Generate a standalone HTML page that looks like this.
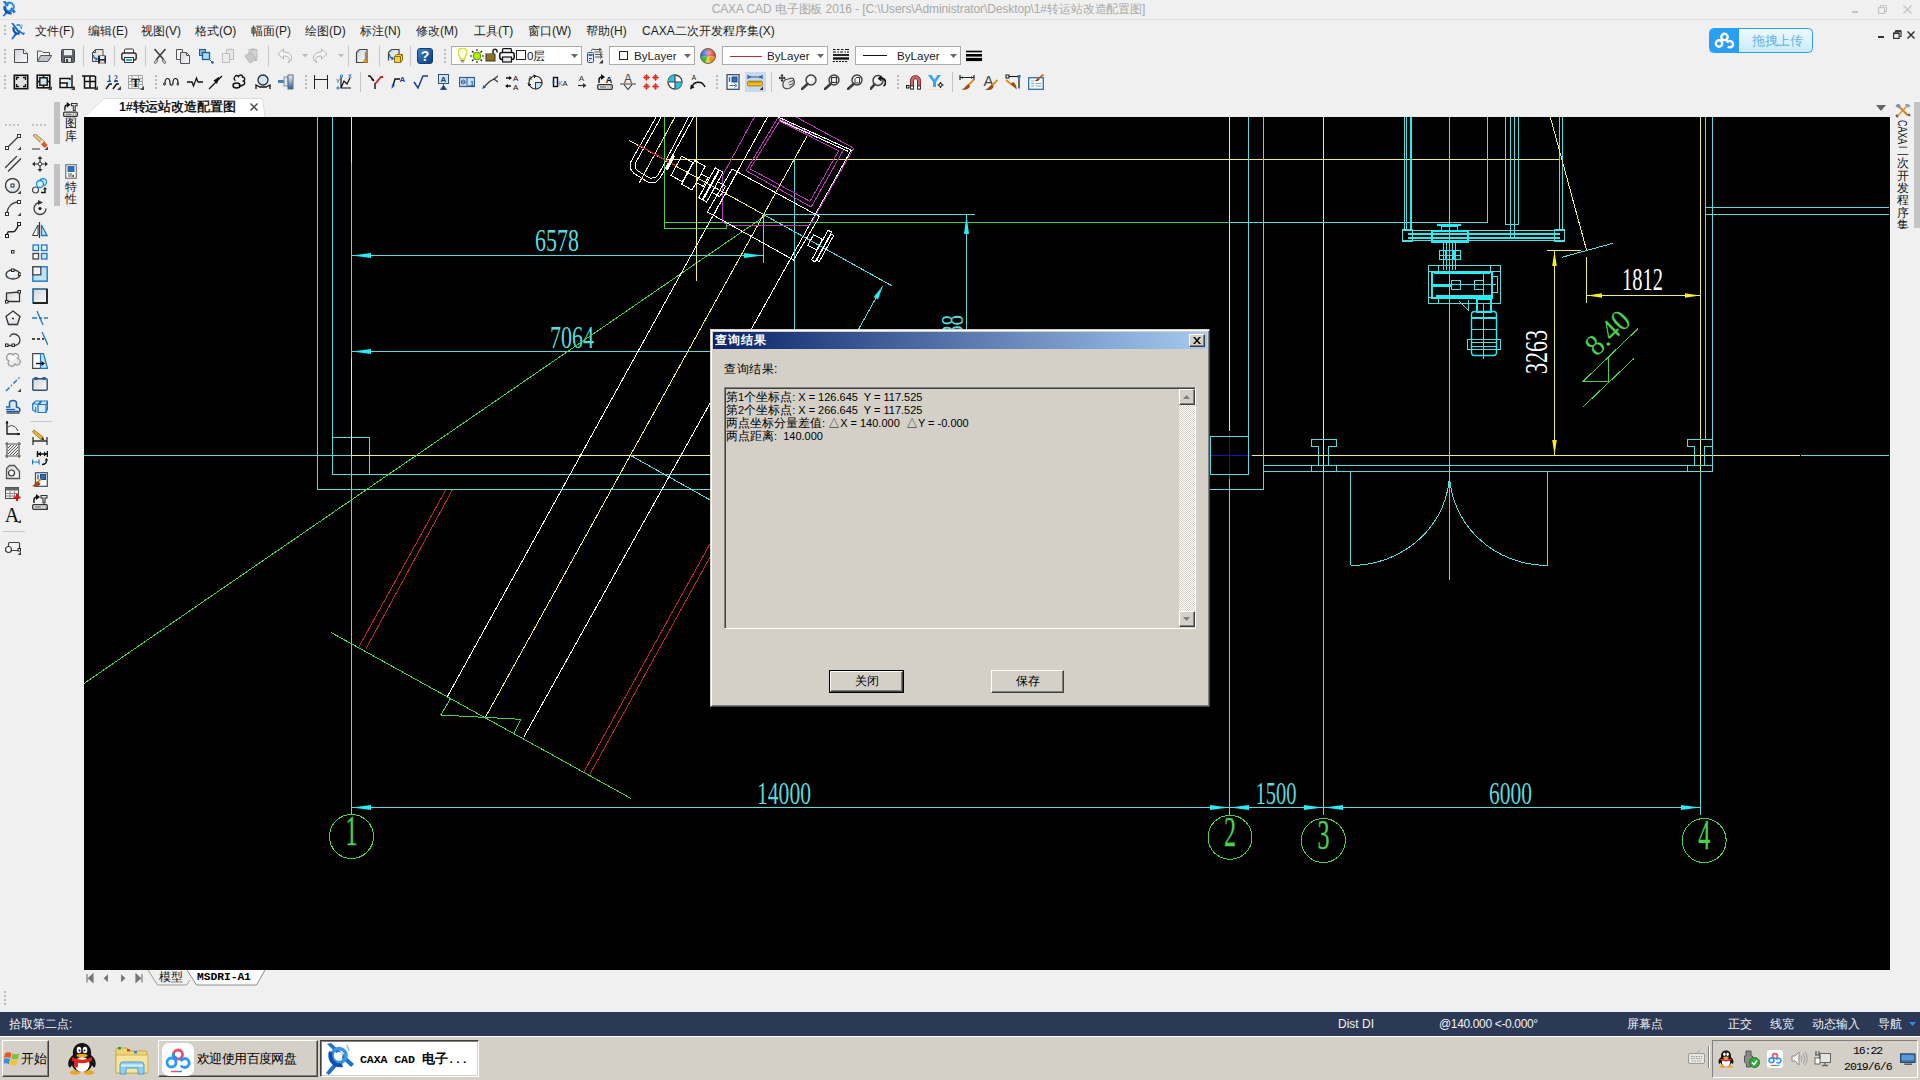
<!DOCTYPE html>
<html lang="zh">
<head>
<meta charset="utf-8">
<title>CAXA CAD</title>
<style>
*{box-sizing:border-box;margin:0;padding:0}
html,body{width:1920px;height:1080px;overflow:hidden;background:#f0f0f0;font-family:"Liberation Sans",sans-serif;font-size:12px;color:#1a1a1a}
.abs{position:absolute}
#titlebar{left:0;top:0;width:1920px;height:20px;background:#f0f0f0;border-bottom:1px solid #e2e2e2}
#title{left:0;top:1px;width:1857px;text-align:center;color:#a9a9a9;font-size:12px;line-height:16px;white-space:nowrap;letter-spacing:-.1px}
#menubar{left:0;top:20px;width:1920px;height:23px}
.mi{position:absolute;top:24px;font-size:12px;line-height:15px;white-space:nowrap;color:#1e1e1e}
#canvas{left:84px;top:117px;width:1806px;height:853px;background:#000}
#status{left:0;top:1012px;width:1920px;height:24px;background:#2b3856;color:#fff}
.st{position:absolute;top:4px;font-size:12px;line-height:16px;color:#f4f4f4;white-space:nowrap}
#taskbar{left:0;top:1036px;width:1920px;height:44px;background:#d4d0c8;border-top:1px solid #fff}
/* dialog */
#dlg{left:710px;top:329px;width:500px;height:378px;background:#d4d0c8;border:1px solid;border-color:#d4d0c8 #404040 #404040 #d4d0c8;box-shadow:inset 1px 1px 0 #fff, inset -1px -1px 0 #808080}
#dlgtitle{left:2px;top:2px;width:494px;height:17px;letter-spacing:.9px;background:linear-gradient(90deg,#0a246a 0%,#a6caf0 100%);color:#fff;font-weight:bold;font-size:12px;line-height:17px;padding-left:2px}
.btn{position:absolute;background:#d4d0c8;border:1px solid;border-color:#fff #404040 #404040 #fff;box-shadow:inset -1px -1px 0 #808080;text-align:center;font-size:12px;line-height:20px;color:#000}

.grip{position:absolute;width:2px;background:repeating-linear-gradient(to bottom,#bcbcbc 0,#bcbcbc 2px,transparent 2px,transparent 4px)}
.combo{background:#fff;border:1px solid #ababab}
.ctext{font-size:11.600px;line-height:15px;color:#1a1a1a;white-space:nowrap}
#tabbar{left:84px;top:97px;width:1805px;height:20px}
.sunken{border:1px solid;border-color:#808080 #fff #fff #808080;box-shadow:inset 1px 1px 0 #404040, inset -1px -1px 0 #d4d0c8}
#qtext{left:13px;top:57px;width:472px;height:242px;background:#d4d0c8}
#qtext .l{position:absolute;left:1px;font-size:11px;line-height:13px;white-space:pre;color:#000}
#qtext .l b{font-weight:normal;font-size:12px}
.sbtn{position:absolute;width:16px;height:16px;background:#d4d0c8;border:1px solid;border-color:#fff #404040 #404040 #fff;box-shadow:inset -1px -1px 0 #808080}

.vch{font-size:12px;line-height:13px;width:13px;height:13px;text-align:center;color:#111}
.tbtn{background:#d4d0c8;border:1px solid;border-color:#fff #404040 #404040 #fff;box-shadow:inset -1px -1px 0 #808080}
</style>
</head>
<body>
<!-- TITLE BAR -->
<div id="titlebar" class="abs"></div>
<div id="title" class="abs">CAXA CAD 电子图板 2016 - [C:\Users\Administrator\Desktop\1#转运站改造配置图]</div>

<!-- MENU BAR -->
<div id="menubar" class="abs"></div>
<div class="mi" style="left:35px">文件(F)</div>
<div class="mi" style="left:88px">编辑(E)</div>
<div class="mi" style="left:141px">视图(V)</div>
<div class="mi" style="left:195px">格式(O)</div>
<div class="mi" style="left:251px">幅面(P)</div>
<div class="mi" style="left:305px">绘图(D)</div>
<div class="mi" style="left:360px">标注(N)</div>
<div class="mi" style="left:416px">修改(M)</div>
<div class="mi" style="left:474px">工具(T)</div>
<div class="mi" style="left:528px">窗口(W)</div>
<div class="mi" style="left:586px">帮助(H)</div>
<div class="mi" style="left:642px">CAXA二次开发程序集(X)</div>

<svg width="0" height="0" style="position:absolute"><defs>
<linearGradient id="gp" x1="0" y1="0" x2="1" y2="1"><stop offset="0" stop-color="#cfd4da"/><stop offset="1" stop-color="#fbfbfc"/></linearGradient>
<linearGradient id="gh" x1="0" y1="0" x2="1" y2="1"><stop offset="0" stop-color="#3f86d0"/><stop offset="1" stop-color="#0d3b78"/></linearGradient>
<linearGradient id="g3" x1="0" y1="0" x2="0" y2="1"><stop offset="0" stop-color="#f4f6f8"/><stop offset="1" stop-color="#2c5e9e"/></linearGradient>
<radialGradient id="gz" cx=".4" cy=".35" r=".7"><stop offset="0" stop-color="#fff"/><stop offset="1" stop-color="#d4dde6"/></radialGradient>
<radialGradient id="gw" cx=".5" cy=".3" r=".8"><stop offset="0" stop-color="#fff" stop-opacity=".55"/><stop offset=".6" stop-color="#fff" stop-opacity="0"/></radialGradient>
</defs></svg>
<div class="abs grip" style="left:4px;top:49px;height:14px"></div>
<svg class="abs" style="left:13px;top:48px" width="16" height="16" viewBox="0 0 16 16"><path d="M1.5 1.5h9l4 4v9h-13z" fill="url(#gp)" stroke="#4a4a4a"/><path d="M10.5 1.5v4h4" fill="#fafafa" stroke="#4a4a4a"/></svg>
<svg class="abs" style="left:36px;top:48px" width="16" height="16" viewBox="0 0 16 16"><path d="M1.5 13.5v-10.5h4l1.5 1.5h6.5v3" stroke="#555" fill="#f4f4f4"/><path d="M1.5 13.5l3.2-6h11l-3.7 6z" fill="#bfc4ca" stroke="#555"/></svg>
<svg class="abs" style="left:60px;top:48px" width="16" height="16" viewBox="0 0 16 16"><rect x="1.5" y="1.5" width="13" height="13" rx="1.2" fill="#5b6472" stroke="#444"/><rect x="4" y="2" width="8" height="5.2" fill="#eceef0"/><rect x="4.5" y="9.5" width="7" height="5" fill="#dcdcdc" stroke="#444"/><rect x="6" y="11" width="2" height="3" fill="#444"/></svg>
<svg class="abs" style="left:91px;top:48px" width="16" height="16" viewBox="0 0 16 16"><path d="M1.5 13.500v-9l3-3h7.500v12z" fill="url(#gp)" stroke="#4a4a4a"/><path d="M1.5 4.500h3v-3" fill="none" stroke="#4a4a4a"/><path d="M2.5 7c0 3 1 4 3.5 4M4.5 9.5l1.8 1.5-1.8 1.5" stroke="#1b6fc0" fill="none" stroke-width="1.3"/><rect x="7" y="7.5" width="8" height="8" fill="#222"/><rect x="9" y="8" width="4.5" height="3" fill="#e8e8e8"/><rect x="9" y="12.5" width="4.5" height="3" fill="#ccc"/></svg>
<svg class="abs" style="left:121px;top:48px" width="16" height="16" viewBox="0 0 16 16"><rect x="3.5" y="1" width="9" height="5" rx="1" fill="#fff" stroke="#333"/><rect x="0.8" y="5" width="14.4" height="7" rx="2" fill="#f0f0f0" stroke="#2a2a2a" stroke-width="1.4"/><rect x="3.5" y="9.5" width="9" height="5" fill="#fff" stroke="#333"/><rect x="5" y="11" width="6" height="2" fill="#29a9c8"/></svg>
<svg class="abs" style="left:152px;top:48px" width="16" height="16" viewBox="0 0 16 16"><path d="M2.5 1l9.5 11M13.5 1l-9.5 11" stroke="#3c3c3c" stroke-width="1.6" fill="none"/><path d="M2 14.5l2.5-3 1.5 1.2-2.5 3zM14 14.5l-2.5-3-1.5 1.2 2.5 3z" fill="#ddd" stroke="#444" stroke-width=".8"/></svg>
<svg class="abs" style="left:175px;top:48px" width="16" height="16" viewBox="0 0 16 16"><path d="M1.5 1.5h6v10h-6z" fill="#f4f4f4" stroke="#555"/><path d="M5.500 4.500h6l3 3v8h-9z" fill="url(#gp)" stroke="#555"/><path d="M11.5 4.500v3h3" fill="none" stroke="#555"/></svg>
<svg class="abs" style="left:198px;top:48px" width="16" height="16" viewBox="0 0 16 16"><rect x="1.5" y="1.5" width="6" height="6" fill="#7db7e0" stroke="#1b5f9c"/><rect x="4.500" y="4.500" width="7" height="7" fill="#a8daf2" stroke="#1b5f9c" stroke-width="1.3"/><path d="M11.5 11.5l3 3" stroke="#1b5f9c"/><circle cx="14.500" cy="14.500" r="1.2" fill="#1b5f9c"/></svg>
<svg class="abs" style="left:221px;top:48px" width="16" height="16" viewBox="0 0 16 16"><path d="M5.500 1.500h7v10h-7z" fill="#e6e6e6" stroke="#bdbdbd"/><path d="M1.5 5.500h7v9h-7z" fill="#ececec" stroke="#bdbdbd"/><rect x="7" y=".5" width="4" height="2" fill="#ccc"/></svg>
<svg class="abs" style="left:244px;top:48px" width="16" height="16" viewBox="0 0 16 16"><path d="M5 1.500h8v11h-8z" fill="#d4d4d4" stroke="#bdbdbd"/><path d="M1 8l6-4 5 7-6 4z" fill="#c9c9c9" stroke="#b5b5b5"/><rect x="7" y=".5" width="4" height="2" fill="#bbb"/></svg>
<svg class="abs" style="left:277px;top:48px" width="16" height="16" viewBox="0 0 16 16"><path d="M1 6l5.500-5v3c5 0 8 2 8 6.500 0 2-1.500 3.500-3.500 4 1-1 1.500-2 1.500-3 0-2-2-3.500-6-3.500v3z" fill="#f4f4f4" stroke="#b4b4b4"/></svg>
<svg class="abs" style="left:312px;top:48px" width="16" height="16" viewBox="0 0 16 16"><path d="M15 6l-5.500-5v3c-5 0-8 2-8 6.500 0 2 1.500 3.500 3.500 4-1-1-1.500-2-1.500-3 0-2 2-3.500 6-3.500v3z" fill="#f4f4f4" stroke="#b4b4b4"/></svg>
<svg class="abs" style="left:355px;top:48px" width="16" height="16" viewBox="0 0 16 16"><path d="M1.5 14.500v-10l3-3h7.500v13z" fill="url(#gp)" stroke="#444" stroke-width="1.2"/><path d="M10.500 4v6" stroke="#c8821a" stroke-width="1.4"/><path d="M8 14.500l2.500-4.500 2.500 4.500z" fill="#f29a1f" stroke="#b06a10" stroke-width=".7"/></svg>
<svg class="abs" style="left:387px;top:48px" width="16" height="16" viewBox="0 0 16 16"><path d="M1.500 12.500v-8l3-3h7.500v5" fill="url(#gp)" stroke="#444" stroke-width="1.2"/><path d="M2.500 6c0 3 1 4.500 3.500 4.500M4.500 9l1.800 1.500-1.800 1.500" stroke="#1b6fc0" fill="none" stroke-width="1.3"/><path d="M7.500 8.500l2-2h6v6l-2 2h-6z" fill="#f5cf3a" stroke="#8a6d10"/><path d="M7.500 8.500h6v6M13.500 8.500l2-2" stroke="#8a6d10" fill="none"/></svg>
<svg class="abs" style="left:417px;top:48px" width="16" height="16" viewBox="0 0 16 16"><rect x=".5" y=".5" width="15" height="15" rx="2.500" fill="url(#gh)" stroke="#0f3f78"/><text x="8" y="13" font-family="'Liberation Sans',sans-serif" font-weight="bold" font-size="14" fill="#fff" text-anchor="middle">?</text></svg>
<div class="abs" style="left:83px;top:46px;width:1px;height:20px;background:#c4c4c4"></div>
<div class="abs" style="left:114px;top:46px;width:1px;height:20px;background:#c4c4c4"></div>
<div class="abs" style="left:145px;top:46px;width:1px;height:20px;background:#c4c4c4"></div>
<div class="abs" style="left:268px;top:46px;width:1px;height:20px;background:#c4c4c4"></div>
<div class="abs" style="left:348px;top:46px;width:1px;height:20px;background:#c4c4c4"></div>
<div class="abs" style="left:379px;top:46px;width:1px;height:20px;background:#c4c4c4"></div>
<div class="abs" style="left:410px;top:46px;width:1px;height:20px;background:#c4c4c4"></div>
<svg class="abs" style="left:302px;top:54px" width="6" height="4" viewBox="0 0 6 4"><path d="M0 0h6l-3 3.500z" fill="#bdbdbd"/></svg>
<svg class="abs" style="left:338px;top:54px" width="6" height="4" viewBox="0 0 6 4"><path d="M0 0h6l-3 3.500z" fill="#bdbdbd"/></svg>
<div class="abs grip" style="left:444px;top:49px;height:14px"></div>
<div class="abs combo" style="left:451px;top:46px;width:131px;height:19px"></div>
<svg class="abs" style="left:571px;top:54px" width="7" height="4" viewBox="0 0 7 4"><path d="M0 0h7l-3.500 4z" fill="#666"/></svg>
<svg class="abs" style="left:458px;top:48px" width="10" height="15" viewBox="0 0 10 15"><path d="M5 0c-3.500 0-5 2.500-5 4.500 0 2 1.500 3 2 5v1.500h5v-1.500c.500-2 2-3 2-5 0-2-1.500-4.500-4-4.500z" fill="#fdfdf0" stroke="#d7e021" stroke-width="1.400"/><path d="M2.500 12.500h4M3 14h3" stroke="#777" stroke-width="1.200"/></svg>
<svg class="abs" style="left:470px;top:49px" width="14" height="14" viewBox="0 0 14 14"><circle cx="7" cy="7" r="3.800" fill="#b5f000" stroke="#5d8a00"/><path d="M7 0v2M7 12v2M0 7h2M12 7h2M2 2l1.500 1.500M10.500 10.500l1.500 1.500M12 2l-1.500 1.500M2 12l1.500-1.500" stroke="#111" stroke-width="1.100"/></svg>
<svg class="abs" style="left:485px;top:48px" width="13" height="14" viewBox="0 0 13 14"><path d="M8 6v-3c0-2.500 4-2.500 4 0v1.500" fill="none" stroke="#222" stroke-width="1.500"/><rect x="1" y="6" width="9" height="7" fill="#caa83a" stroke="#3a3210"/><path d="M1 8h9M1 10h9M1 12h9" stroke="#3a3210" stroke-width=".9"/></svg>
<svg class="abs" style="left:499px;top:48px" width="16" height="15" viewBox="0 0 16 15"><rect x="3.500" y="0.700" width="9" height="5" rx="1" fill="#fff" stroke="#111" stroke-width="1.300"/><rect x=".800" y="4.500" width="14.400" height="7" rx="2.200" fill="#fff" stroke="#111" stroke-width="1.500"/><rect x="3.500" y="9" width="9" height="5" fill="#e6e6e6" stroke="#111" stroke-width="1.200"/></svg>
<div class="abs" style="left:516px;top:50px;width:10px;height:10px;border:1.300px solid #222"></div>
<div class="abs ctext" style="left:527px;top:48px">0层</div>
<svg class="abs" style="left:587px;top:48px" width="16" height="16" viewBox="0 0 16 16"><rect x=".500" y="4.500" width="6" height="10" rx="1" fill="#dfeaf5" stroke="#35536f"/><rect x="1.500" y="6" width="4" height="2" fill="#2f6db5"/><path d="M2 10.500h3M2 12.500h1" stroke="#35536f"/><path d="M6 1.500l8 0M7.500 4h8M8 6.500h6M8 9h7" stroke="#555" stroke-width="1.100"/><path d="M4 3l2-2.500M12 0l2.500 1.500-2.500 1.500M13 5l2.500 1.500-2.500 1.500M13 7.500l2.500 1.500-2.500 1.500" fill="none" stroke="#555"/><path d="M16.500 15.500h-4.500l4.500-4.500z" fill="#333"/></svg>
<div class="abs combo" style="left:609px;top:46px;width:86px;height:19px"></div>
<svg class="abs" style="left:684px;top:54px" width="7" height="4" viewBox="0 0 7 4"><path d="M0 0h7l-3.500 4z" fill="#666"/></svg>
<div class="abs" style="left:619px;top:51px;width:9px;height:9px;border:1.200px solid #222"></div>
<div class="abs ctext" style="left:634px;top:48px">ByLayer</div>
<svg class="abs" style="left:700px;top:48px" width="16" height="16" viewBox="0 0 16 16"><circle cx="8" cy="8" r="7.500" fill="#e8d23a"/><path d="M8 8L.5 8A7.500 7.500 0 0 1 8 .5z" fill="#3a57d8"/><path d="M8 8V.5A7.500 7.500 0 0 1 15.500 8z" fill="#e23a2a"/><path d="M8 8L.5 8A7.500 7.500 0 0 0 5 14.900z" fill="#3ab54a"/><path d="M8 8L15.500 8A7.500 7.500 0 0 1 11 14.900z" fill="#f08a2a"/><circle cx="8" cy="8" r="7.500" fill="url(#gw)" stroke="#666"/></svg>
<div class="abs combo" style="left:722px;top:46px;width:106px;height:19px"></div>
<svg class="abs" style="left:817px;top:54px" width="7" height="4" viewBox="0 0 7 4"><path d="M0 0h7l-3.500 4z" fill="#666"/></svg>
<div class="abs" style="left:730px;top:56px;width:32px;height:1px;background:#c0282d"></div>
<div class="abs ctext" style="left:767px;top:48px">ByLayer</div>
<svg class="abs" style="left:833px;top:48px" width="16" height="16" viewBox="0 0 16 16"><path d="M0 1.500h2.500M4 1.500h2.500M8 1.500h2.500M12 1.500h4M0 4h3M4.500 4h1.500M7 4h3M11.500 4h1.500M14 4h2M0 13.500h2M3 13.500h2M6 13.500h2M9 13.500h2M12 13.500h2" stroke="#111" stroke-width="1.200"/><path d="M0 7h16" stroke="#111" stroke-width="1.800"/><path d="M0 10.500h16" stroke="#111" stroke-width="2.400"/></svg>
<div class="abs combo" style="left:855px;top:46px;width:106px;height:19px"></div>
<svg class="abs" style="left:950px;top:54px" width="7" height="4" viewBox="0 0 7 4"><path d="M0 0h7l-3.500 4z" fill="#666"/></svg>
<div class="abs" style="left:863px;top:55px;width:24px;height:1px;background:#111"></div>
<div class="abs ctext" style="left:897px;top:48px">ByLayer</div>
<svg class="abs" style="left:966px;top:50px" width="16" height="12" viewBox="0 0 16 11"><path d="M0 1h16" stroke="#000" stroke-width="1.600"/><path d="M0 4.800h16" stroke="#000" stroke-width="2.600"/><path d="M0 9h16" stroke="#000" stroke-width="3.200"/></svg>
<div class="abs grip" style="left:4px;top:75px;height:14px"></div>
<svg class="abs" style="left:13px;top:74px" width="16" height="16" viewBox="0 0 16 16"><rect x="1.300" y="1.300" width="13.400" height="13.400" fill="#e2e2e2" stroke="#111" stroke-width="1.600"/><path d="M3.500 6v-2.500h2.500M10 3.500h2.500v2.500M12.500 10v2.500h-2.500M6 12.500h-2.500v-2.500" stroke="#111" fill="none" stroke-width="1.300"/></svg>
<svg class="abs" style="left:36px;top:74px" width="16" height="16" viewBox="0 0 16 16"><rect x="1.200" y="1.200" width="12.600" height="12.600" fill="#e2e2e2" stroke="#111" stroke-width="1.600"/><rect x="3.800" y="3.800" width="7.400" height="7.400" fill="#cfe6f5" stroke="#111" stroke-width="1.400"/><path d="M7.500 1v3M7.500 11v3M1 7.500h3M11 7.500h3" stroke="#111" stroke-width="1.600"/><path d="M16 16h-4l4-4z" fill="#444"/></svg>
<svg class="abs" style="left:59px;top:74px" width="16" height="16" viewBox="0 0 16 16"><path d="M1 4.500h10v9h-10zM1 9h10M8 9v4.500" fill="#f6f6f6" stroke="#111" stroke-width="1.400"/><path d="M11 13.500h4M13 1v13" stroke="#111" stroke-width="1.400"/><rect x="9" y="6" width="3" height="7" fill="#cfe6f5"/><path d="M16 16h-4l4-4z" fill="#444"/></svg>
<svg class="abs" style="left:82px;top:74px" width="16" height="16" viewBox="0 0 16 16"><path d="M0 2h13M2.500 2v12h11v-12M2.500 7.500h11M8 2v12" fill="none" stroke="#111" stroke-width="1.500"/><path d="M16 16h-4l4-4z" fill="#444"/></svg>
<svg class="abs" style="left:105px;top:74px" width="16" height="16" viewBox="0 0 16 16"><text x="2.500" y="6.500" font-size="7.500" font-family="'Liberation Serif',serif" font-weight="bold" fill="#154c9c">1</text><text x="9" y="6.500" font-size="7.500" font-family="'Liberation Serif',serif" font-weight="bold" fill="#154c9c">2</text><path d="M2 7.500h4M9 7.500h4" stroke="#154c9c"/><path d="M1 15l3.500-5h2.500M8 15l3.500-5h2.500" stroke="#111" stroke-width="1.400" fill="none"/><path d="M16 16h-4l4-4z" fill="#444"/></svg>
<svg class="abs" style="left:128px;top:74px" width="16" height="16" viewBox="0 0 16 16"><path d="M.5 1.500h14v13h-14zM.5 4.500h14M.5 7.500h14M.5 10.500h14M4 1.500v13M10.500 1.500v13" fill="#f2f2f2" stroke="#a4a4a4"/><text x="7.500" y="12.500" font-size="13" font-family="'Liberation Serif',serif" font-weight="bold" fill="#111" text-anchor="middle">T</text><path d="M16 16h-4l4-4z" fill="#444"/></svg>
<svg class="abs" style="left:163px;top:74px" width="16" height="16" viewBox="0 0 16 16"><circle cx="1.500" cy="10" r="1" fill="none" stroke="#111"/><path d="M2 9c0-6 5-6 5 0 0 3 3 3 3 0 0-6 5-6 5 0" fill="none" stroke="#111" stroke-width="1.100"/><circle cx="15" cy="10" r="1" fill="none" stroke="#111"/></svg>
<svg class="abs" style="left:187px;top:74px" width="16" height="16" viewBox="0 0 16 16"><path d="M0 8h5l1.500 4 3-8 1.500 4h5" fill="none" stroke="#111" stroke-width="1.300"/></svg>
<svg class="abs" style="left:208px;top:74px" width="16" height="16" viewBox="0 0 16 16"><path d="M1 15l13-13" stroke="#111" stroke-width="1.300"/><path d="M11.500 2.500l-6 4 3.500 3.500z" fill="#111"/></svg>
<svg class="abs" style="left:232px;top:74px" width="16" height="16" viewBox="0 0 16 16"><path d="M3 3c0-2 3-2 3.500-.5 1 -2 4-2 4 .5 2.500 0 3 3 1 4 2 1 1.500 4-1 4-1 1.500-3 1-3.500 0" fill="none" stroke="#111" stroke-width="1.400"/><ellipse cx="4.500" cy="11.500" rx="3.500" ry="2.500" fill="none" stroke="#111" stroke-width="1.400"/><path d="M3 3c-1.500 1-1 3 .5 3.500" fill="none" stroke="#111" stroke-width="1.400"/></svg>
<svg class="abs" style="left:255px;top:74px" width="16" height="16" viewBox="0 0 16 16"><circle cx="8" cy="6" r="5" fill="#cfe8f8" stroke="#2a2a2a" stroke-width="1.300"/><path d="M1 15v-4l4 2h6l4-2v4" fill="none" stroke="#111" stroke-width="1.300"/></svg>
<svg class="abs" style="left:278px;top:74px" width="16" height="16" viewBox="0 0 16 16"><rect x="0" y="6" width="7" height="3" fill="#4a7fb5"/><rect x="6" y="3" width="4" height="9" fill="#dfe7ee" stroke="#7d8fa0"/><rect x="10" y="1" width="5" height="14" fill="url(#g3)" stroke="#5a6b7c"/></svg>
<svg class="abs" style="left:313px;top:74px" width="16" height="16" viewBox="0 0 16 16"><path d="M1.500 1v14M14.500 1v14M1.500 5.500h13" stroke="#222" stroke-width="1" fill="none"/></svg>
<svg class="abs" style="left:336px;top:74px" width="16" height="16" viewBox="0 0 16 16"><path d="M5 3v11h10M5 14l3-7 3 3 3-6" fill="none" stroke="#111" stroke-width="1.200"/><circle cx="5.500" cy="2" r="1.200" fill="none" stroke="#1b78c8"/><circle cx="2" cy="14" r="1.200" fill="none" stroke="#1b78c8"/><text x="0" y="9" font-size="5.500" fill="#1b78c8" font-family="'Liberation Sans',sans-serif" font-weight="bold">Y</text><text x="12" y="4" font-size="5.500" fill="#1b78c8" font-family="'Liberation Sans',sans-serif" font-weight="bold">X</text></svg>
<svg class="abs" style="left:367px;top:74px" width="16" height="16" viewBox="0 0 16 16"><path d="M1 2h2l4 5M8 15v-6" stroke="#111" stroke-width="1.400" fill="none"/><path d="M8 10l6-7h2" stroke="#d51c1c" stroke-width="1.800" fill="none"/><path d="M4 6l3 1-1-3" fill="#111"/></svg>
<svg class="abs" style="left:390px;top:74px" width="16" height="16" viewBox="0 0 16 16"><path d="M3 12l2-7h5" fill="none" stroke="#111" stroke-width="1.400"/><path d="M1.500 15l.5-5 3 1.500z" fill="#1b5fb0"/><text x="9.500" y="8" font-size="8" font-weight="bold" font-family="'Liberation Sans',sans-serif" fill="#1b3f90">A</text></svg>
<svg class="abs" style="left:413px;top:74px" width="16" height="16" viewBox="0 0 16 16"><path d="M1 8l4 6 5-12h5" fill="none" stroke="#173f8a" stroke-width="1.500"/></svg>
<svg class="abs" style="left:437px;top:74px" width="16" height="16" viewBox="0 0 16 16"><rect x="1.500" y=".500" width="10" height="9" fill="#d0e4f5" stroke="#35536f"/><text x="6.500" y="8" font-size="8" font-weight="bold" text-anchor="middle" font-family="'Liberation Sans',sans-serif" fill="#173f8a">A</text><path d="M6.500 9.500v3M3.500 15.500l3-4 3 4z" fill="#173f8a" stroke="#173f8a" stroke-width=".8"/></svg>
<svg class="abs" style="left:459px;top:74px" width="16" height="16" viewBox="0 0 16 16"><rect x=".500" y="3.500" width="15" height="9" fill="#cfe0f2" stroke="#2d5e9a" stroke-width="1.200"/><path d="M8 3.500v9" stroke="#2d5e9a"/><circle cx="4.200" cy="8" r="2" fill="none" stroke="#2d5e9a"/><path d="M2 8h4.500" stroke="#2d5e9a"/><text x="9" y="11.500" font-size="7" font-weight="bold" fill="#2d5e9a" font-family="'Liberation Sans',sans-serif">.1</text></svg>
<svg class="abs" style="left:482px;top:74px" width="16" height="16" viewBox="0 0 16 16"><path d="M2 13l5-5c2-2 4-2 5-3l4-3M12 5l4 3" fill="none" stroke="#333" stroke-width="1.200"/><path d="M0 15l1.500-4 2.500 2.500z" fill="#1b5fb0"/></svg>
<svg class="abs" style="left:505px;top:74px" width="16" height="16" viewBox="0 0 16 16"><path d="M1 4h5M1 12h5" stroke="#111" stroke-width="1.400"/><path d="M4 2l3 2-3 2zM3 10l-3 2 3 2z" fill="#111"/><text x="8" y="7" font-size="8" font-family="'Liberation Sans',sans-serif" fill="#111">A</text><text x="8" y="15.500" font-size="8" font-family="'Liberation Sans',sans-serif" fill="#111">A</text></svg>
<svg class="abs" style="left:527px;top:74px" width="16" height="16" viewBox="0 0 16 16"><circle cx="8.500" cy="8.500" r="6.500" fill="none" stroke="#333" stroke-width="1.200"/><path d="M8.500 8.500h6.500a6.500 6.500 0 0 1-6.500 6.500z" fill="#bfe0f5" stroke="#333"/><path d="M8.500 15v-6.500h6.500" fill="none" stroke="#333"/><path d="M6 1l3 1-2 2M1 9l1 3 2-2" fill="none" stroke="#111"/><text x="1.500" y="6" font-size="5" font-family="'Liberation Sans',sans-serif" fill="#111">A</text></svg>
<svg class="abs" style="left:552px;top:74px" width="16" height="16" viewBox="0 0 16 16"><rect x="1.500" y="3.500" width="4" height="9" fill="none" stroke="#111" stroke-width="1.400"/><path d="M0 8h3" stroke="#1b78c8"/><text x="6" y="11.500" font-size="7" font-family="'Liberation Sans',sans-serif" fill="#1b78c8">K</text><text x="10.500" y="11.500" font-size="7.500" font-family="'Liberation Sans',sans-serif" fill="#111">A</text></svg>
<svg class="abs" style="left:577px;top:74px" width="16" height="16" viewBox="0 0 16 16"><text x="4.500" y="7" font-size="8" font-family="'Liberation Sans',sans-serif" fill="#333" text-anchor="middle">A</text><path d="M1 11.500h7" stroke="#333" stroke-width="1.200"/><path d="M6 9l3.500 2.500-3.500 2.500z" fill="#333"/></svg>
<svg class="abs" style="left:597px;top:74px" width="16" height="16" viewBox="0 0 16 16"><path d="M2 9v-3c0-2 1-3 3-3" fill="none" stroke="#111" stroke-width="1.400"/><path d="M4 0l4 3-4 3z" fill="#111"/><text x="12" y="8.500" font-size="9" font-weight="bold" text-anchor="middle" font-family="'Liberation Sans',sans-serif" fill="#111">A</text><rect x=".700" y="10.700" width="14.600" height="4.600" rx="1" fill="#e4e4e4" stroke="#333" stroke-width="1.300"/><path d="M3 13h6M10.500 13h1M13 13h.8" stroke="#555"/></svg>
<svg class="abs" style="left:620px;top:74px" width="16" height="16" viewBox="0 0 16 16"><text x="8" y="8.500" font-size="12" text-anchor="middle" font-family="'Liberation Sans',sans-serif" fill="#444">A</text><path d="M0 10h16M4 10.500l4 5 4-5" fill="none" stroke="#444" stroke-width="1.200"/></svg>
<svg class="abs" style="left:643px;top:74px" width="16" height="16" viewBox="0 0 16 16"><g transform="translate(3.5 3.5)"><circle r="1.900" fill="#fff" stroke="#e22b1c" stroke-width="1.100"/><path d="M-3.300 0h6.600M0-3.300v6.600" stroke="#e22b1c" stroke-width="1.100"/></g><g transform="translate(12.5 3.5)"><circle r="1.900" fill="#fff" stroke="#e22b1c" stroke-width="1.100"/><path d="M-3.300 0h6.600M0-3.300v6.600" stroke="#e22b1c" stroke-width="1.100"/></g><g transform="translate(3.5 12.5)"><circle r="1.900" fill="#fff" stroke="#e22b1c" stroke-width="1.100"/><path d="M-3.300 0h6.600M0-3.300v6.600" stroke="#e22b1c" stroke-width="1.100"/></g><g transform="translate(12.5 12.5)"><circle r="1.900" fill="#fff" stroke="#e22b1c" stroke-width="1.100"/><path d="M-3.300 0h6.600M0-3.300v6.600" stroke="#e22b1c" stroke-width="1.100"/></g></svg>
<svg class="abs" style="left:667px;top:74px" width="16" height="16" viewBox="0 0 16 16"><circle cx="8" cy="8" r="7" fill="#fff" stroke="#444" stroke-width="1.300"/><path d="M8 8V1a7 7 0 0 0-7 7zM8 8v7a7 7 0 0 0 7-7z" fill="#29c4e0"/><path d="M8 1v14M1 8h14" stroke="#444" stroke-width="1.200"/></svg>
<svg class="abs" style="left:690px;top:74px" width="16" height="16" viewBox="0 0 16 16"><text x="4" y="6" font-size="6.500" font-family="'Liberation Sans',sans-serif" fill="#111" text-anchor="middle">A</text><path d="M2 14c1-7 10-8 13-1" fill="none" stroke="#111" stroke-width="1.400"/><path d="M0 15.500l1-5 3.500 3z" fill="#111"/></svg>
<svg class="abs" style="left:726px;top:74px" width="16" height="16" viewBox="0 0 16 16"><rect x="1" y=".700" width="12" height="14.600" fill="#fdfdfd" stroke="#34506c" stroke-width="1.300"/><rect x="6" y="3" width="5" height="5" fill="#2f6db5" stroke="#1d4a80"/><path d="M3.500 3v5" stroke="#2f6db5" stroke-width="1.500"/><path d="M3.500 11.500h6" stroke="#2f6db5"/><path d="M8.500 9.500l2.500 2-2.500 2" fill="none" stroke="#2f6db5"/></svg>
<svg class="abs" style="left:779px;top:74px" width="16" height="16" viewBox="0 0 16 16"><path d="M3 1v6M0 4h6" stroke="#111" stroke-width="1.100"/><path d="M3 0l-1.500 1.800h3zM3 8l-1.500-1.800h3zM-0.500 4l1.800-1.500v3zM6.500 4l-1.800-1.500v3z" fill="#111"/><path d="M4 9c1-3 3-4 5-4l4-1c2 0 2 2 1 2.500 2 0 2 2 .5 2.500 1 .500 1 2-.500 2.500l-3 2.500c-3 1.500-6 .500-7-1.500z" fill="#e6e6e6" stroke="#444" stroke-width="1.200"/><path d="M9.500 8.500l4.500-2M10 11l4.500-1.500" stroke="#555" fill="none"/></svg>
<svg class="abs" style="left:801px;top:74px" width="16" height="16" viewBox="0 0 16 16"><circle cx="10" cy="6" r="5" fill="url(#gz)" stroke="#3c3c3c" stroke-width="1.400"/><path d="M6.500 10l-5.500 5" stroke="#3c3c3c" stroke-width="2.600" stroke-linecap="round"/></svg>
<svg class="abs" style="left:824px;top:74px" width="16" height="16" viewBox="0 0 16 16"><circle cx="10" cy="6" r="5" fill="#f4f7fa" stroke="#3c3c3c" stroke-width="1.400"/><rect x="7.500" y="3.500" width="5" height="5" fill="none" stroke="#333" stroke-width="1.200"/><path d="M6.500 10l-5.500 5" stroke="#3c3c3c" stroke-width="2.600" stroke-linecap="round"/></svg>
<svg class="abs" style="left:847px;top:74px" width="16" height="16" viewBox="0 0 16 16"><circle cx="10" cy="6" r="5" fill="#f4f7fa" stroke="#3c3c3c" stroke-width="1.400"/><path d="M8 4.500l1-1h3.500v5.500h-4.500z" fill="#fff" stroke="#333"/><path d="M6.500 10l-5.500 5" stroke="#3c3c3c" stroke-width="2.600" stroke-linecap="round"/></svg>
<svg class="abs" style="left:870px;top:74px" width="16" height="16" viewBox="0 0 16 16"><circle cx="8" cy="6.500" r="5" fill="url(#gz)" stroke="#3c3c3c" stroke-width="1.400"/><path d="M4.500 10.500l-4 4.500" stroke="#3c3c3c" stroke-width="2.600" stroke-linecap="round"/><path d="M10 4.500c3-1 5.500 1 5.500 4 0 2-1 3-2 3.500" fill="none" stroke="#111" stroke-width="1.600"/><path d="M7.500 4.500l4-3v6z" fill="#111"/></svg>
<svg class="abs" style="left:906px;top:74px" width="16" height="16" viewBox="0 0 16 16"><path d="M4.500 15v-8.500c0-6.500 10-6.500 10 0v8.500h-3v-8c0-3-4-3-4 0v8z" fill="#c9686e" stroke="#7a2c32"/><rect x="4.500" y="12" width="3" height="3" fill="#fff" stroke="#333"/><rect x="11.500" y="12" width="3" height="3" fill="#fff" stroke="#333"/><rect x=".500" y="11.500" width="2.500" height="2.500" fill="#fff" stroke="#111"/></svg>
<svg class="abs" style="left:928px;top:74px" width="16" height="16" viewBox="0 0 16 16"><path d="M0 1h3.500l3 4.500 3-4.500h3.500l-5 7v5h-3v-5z" fill="#39a7e6"/><path d="M12.500 8v6M9.500 11h6" stroke="#111" stroke-width="1.200"/><circle cx="12.500" cy="11" r="1.600" fill="#fff" stroke="#111"/><path d="M0 15.500h16" stroke="#f3e4b8"/></svg>
<svg class="abs" style="left:959px;top:74px" width="16" height="16" viewBox="0 0 16 16"><path d="M1 1v5M15 1v5M1 3.500h14" stroke="#222" stroke-width="1.200" fill="none"/><path d="M1.500 3.500l2.500-1.300v2.600zM14.500 3.500l-2.500-1.300v2.600z" fill="#222"/><path d="M15 5.500l-6 6" stroke="#e28a1a" stroke-width="1.800"/><path d="M9.500 10.500c-3 .500-3 4-7 5 4 1 8-.500 8.500-3.500z" fill="#9a4a12"/></svg>
<svg class="abs" style="left:982px;top:74px" width="16" height="16" viewBox="0 0 16 16"><text x="6.500" y="12" font-size="15" text-anchor="middle" font-family="'Liberation Sans',sans-serif" fill="#444">A</text><path d="M15.500 6l-6 6" stroke="#e28a1a" stroke-width="1.800"/><path d="M10 11c-3 .500-3 4-7.500 5 4 1 8.500-.500 9-3.500z" fill="#9a4a12"/></svg>
<svg class="abs" style="left:1005px;top:74px" width="16" height="16" viewBox="0 0 16 16"><path d="M2.500 2.500h11.500v12" fill="none" stroke="#111" stroke-width="1.200"/><rect x="1" y="1" width="3" height="3" fill="#fff" stroke="#111"/><rect x="12.500" y="1" width="3" height="3" fill="#1b78c8"/><path d="M1 6l6 5" stroke="#e28a1a" stroke-width="1.800"/><path d="M6 9.500c.500 3 4 3 5.500 6.500.500-4-1.500-7-3.500-8z" fill="#9a4a12"/></svg>
<svg class="abs" style="left:1028px;top:74px" width="16" height="16" viewBox="0 0 16 16"><rect x=".700" y="3.700" width="14.600" height="11.600" fill="#f7fbff" stroke="#2d6fb5" stroke-width="1.300"/><path d="M3 7h3M3 9.500h3M3 12h3M7.500 9.500h6M7.500 12h6" stroke="#8aa" stroke-width="1.100"/><path d="M15.500 .500l-6 5" stroke="#c8521a" stroke-width="1.600"/><path d="M10.500 4.500c-2 .500-3 2-4 2.500 3 .500 5-.500 5-1.500z" fill="#9a3a12"/></svg>
<div class="abs grip" style="left:155px;top:75px;height:14px"></div>
<div class="abs grip" style="left:305px;top:75px;height:14px"></div>
<div class="abs grip" style="left:716px;top:75px;height:14px"></div>
<div class="abs grip" style="left:897px;top:75px;height:14px"></div>
<div class="abs" style="left:360px;top:72px;width:1px;height:20px;background:#c4c4c4"></div>
<div class="abs" style="left:771px;top:72px;width:1px;height:20px;background:#c4c4c4"></div>
<div class="abs" style="left:952px;top:72px;width:1px;height:20px;background:#c4c4c4"></div>
<div class="abs" style="left:745px;top:72px;width:21px;height:20px;background:#c9d9ea"></div>
<svg class="abs" style="left:747px;top:74px" width="16" height="16" viewBox="0 0 16 16"><path d="M1 1v4M15 1v4M1 3h14" stroke="#1b5fa8" stroke-width="1.200" fill="none"/><path d="M1 3l2.500-1.500v3zM15 3l-2.500-1.500v3z" fill="#1b5fa8"/><rect x=".700" y="7.200" width="14.600" height="4.600" rx="1" fill="#f7c51e" stroke="#a07a08"/><path d="M3 7.500v2M5 7.500v1.500M7 7.500v2M9 7.500v1.500M11 7.500v2M13 7.500v1.500" stroke="#7a5c05" stroke-width=".7"/><path d="M16.500 16.500h-4.500l4.500-4.500z" fill="#333"/></svg>

<!-- app logo (title) -->
<svg class="abs" style="left:1px;top:0px" width="17" height="17" viewBox="0 0 32 32"><path d="M3 3l5-1 20 20-4 3z" fill="#1d6fd0"/><path d="M3 30l3 1 9-10-4-2z" fill="#1d6fd0"/><circle cx="16" cy="13" r="8" fill="none" stroke="#2a8be8" stroke-width="4"/><circle cx="16" cy="13" r="3.500" fill="#fff"/><path d="M6 12c0 8 6 14 14 13" fill="none" stroke="#0d4fae" stroke-width="4"/></svg>
<!-- menu logo -->
<div class="grip" style="left:4px;top:25px;height:10px"></div>
<svg class="abs" style="left:9px;top:22px" width="17" height="18" viewBox="0 0 32 34"><path d="M4 2l4 0 14 18-4 2z" fill="#1d6fd0"/><path d="M4 32l3 1 9-11-4-2z" fill="#1d6fd0"/><path d="M8 10c0 9 5 13 12 12" fill="none" stroke="#0d4fae" stroke-width="4"/><path d="M14 6c6-2 10 2 9 7" fill="none" stroke="#2a8be8" stroke-width="3"/><path d="M18 16l9 7 2-3" fill="none" stroke="#1d6fd0" stroke-width="3"/><path d="M20 8l4-4 3 2-3 4z" fill="#8ec4f5"/></svg>
<!-- title window controls -->
<div class="abs" style="left:1852px;top:11px;width:6px;height:2px;background:#c3c3c3"></div>
<svg class="abs" style="left:1878px;top:5px" width="9" height="9" viewBox="0 0 9 9"><path d="M2.500 2.500v-2h6v6h-2" fill="none" stroke="#c3c3c3"/><rect x=".500" y="2.500" width="6" height="6" fill="none" stroke="#c3c3c3" stroke-width="1.200"/></svg>
<svg class="abs" style="left:1903px;top:5px" width="9" height="9" viewBox="0 0 9 9"><path d="M.500 .500l8 8M8.500 .500l-8 8" stroke="#c3c3c3" stroke-width="1.200"/></svg>
<!-- MDI controls -->
<div class="abs" style="left:1878px;top:36px;width:6px;height:2px;background:#333"></div>
<svg class="abs" style="left:1893px;top:30px" width="9" height="9" viewBox="0 0 9 9"><path d="M2.500 2.500v-1.500h5.500v5.500h-1.500" fill="none" stroke="#333" stroke-width="1.200"/><path d="M2.500 1h5.500" stroke="#333" stroke-width="1.800"/><rect x=".600" y="3.100" width="5.500" height="5.300" fill="none" stroke="#333" stroke-width="1.200"/><path d="M.600 3.300h5.500" stroke="#333" stroke-width="1.600"/></svg>
<svg class="abs" style="left:1907px;top:31px" width="8" height="8" viewBox="0 0 8 8"><path d="M.500 .500l7 7M7.500 .500l-7 7" stroke="#333" stroke-width="1.500"/></svg>
<!-- upload button -->
<div class="abs" style="left:1709px;top:28px;width:104px;height:25px;border:1.400px solid #2a9df4;border-radius:4.500px;background:linear-gradient(180deg,#eef9ff 0%,#c9ecfd 100%);overflow:hidden">
  <div class="abs" style="left:0;top:0;width:29px;height:25px;background:#2a9df4"></div>
  <svg class="abs" style="left:4px;top:3px" width="21" height="17" viewBox="0 0 21 17"><circle cx="10.500" cy="5" r="3.200" fill="none" stroke="#fff" stroke-width="2.400"/><circle cx="5" cy="11.500" r="3.200" fill="none" stroke="#fff" stroke-width="2.400"/><path d="M13 10.800a3.200 3.200 0 1 1 .800 3.800" fill="none" stroke="#fff" stroke-width="2.400"/><path d="M7.500 9l1.500-2M12 7l2.500 3" stroke="#fff" stroke-width="2.400"/></svg>
  <div class="abs" style="left:42px;top:4px;font-size:12.500px;line-height:16px;color:#62b4e6;letter-spacing:-.5px;white-space:nowrap">拖拽上传</div>
</div>
<!-- document tab -->
<svg class="abs" style="left:84px;top:96px" width="200" height="21" viewBox="0 0 200 21"><path d="M0 21L20 2.500H176.500q2 0 2.300 2L181 21z" fill="#fff"/><path d="M0 21L20 2.500H176.500q2 0 2.300 2L181 21" fill="none" stroke="#dcdcdc"/></svg>
<div class="abs" style="left:119px;top:99px;font-size:12.500px;line-height:16px;font-weight:bold;color:#1a1a1a;white-space:nowrap;letter-spacing:-.15px">1#转运站改造配置图</div>
<svg class="abs" style="left:250px;top:103px" width="8" height="8" viewBox="0 0 8 8"><path d="M.500 .500l7 7M7.500 .500l-7 7" stroke="#444" stroke-width="1.300"/></svg>
<!-- right of tab bar -->
<svg class="abs" style="left:1876px;top:105px" width="10" height="6" viewBox="0 0 10 6"><path d="M0 0h10l-5 6z" fill="#666"/></svg>
<svg class="abs" style="left:1895px;top:103px" width="16" height="15" viewBox="0 0 16 15"><path d="M3 2.500l10 10" stroke="#c8821a" stroke-width="2"/><path d="M13 2l-10 10.500" stroke="#d89a3a" stroke-width="1.800"/><path d="M0.500 3.500c1-3 4-3 5-1.500l-2 3z" fill="#7f8fa8"/><path d="M10 1.500c2-1 4-.500 5.500 1.500l-2 1.500-2-1z" fill="#8a9ab5"/><path d="M1 12l2 2M13.500 11l1.500 2" stroke="#555" stroke-width="2"/></svg>
<div class="abs" style="left:1914px;top:102px;width:6px;height:126px;background:#c4c4c4"></div>
<div class="abs" style="left:1895px;top:119px;width:16px;height:110px;overflow:hidden"><div class="abs" style="left:0;top:1px;width:34px;height:14px;font-size:12px;line-height:14px;color:#111;transform-origin:0 0;transform:translate(14px,0) rotate(90deg) scaleX(.74);white-space:nowrap">CAXA</div><div class="abs vch" style="left:1px;top:26.0px">二</div><div class="abs vch" style="left:1px;top:38.3px">次</div><div class="abs vch" style="left:1px;top:50.6px">开</div><div class="abs vch" style="left:1px;top:62.9px">发</div><div class="abs vch" style="left:1px;top:75.2px">程</div><div class="abs vch" style="left:1px;top:87.5px">序</div><div class="abs vch" style="left:1px;top:99.8px">集</div></div>
<!-- bottom sheet tabs -->
<svg class="abs" style="left:84px;top:970px" width="200" height="16" viewBox="0 0 200 16">
<path d="M3 4v8.500M4.500 8.200l4.500-4v8z" fill="#777" stroke="#777" stroke-width="1.200"/>
<path d="M19.500 8.200l4.500-4v8z" fill="#777"/><path d="M41.500 8.200l-4.500-4v8z" fill="#777"/>
<path d="M58 4v8.500M56.500 8.200l-4.500-4v8z" fill="#777" stroke="#777" stroke-width="1.200"/>
<path d="M64 0l9.500 15h29l3.500-5" fill="#f0f0f0" stroke="#9a9a9a"/>
<path d="M103 0l9.500 15h60l8.500-15z" fill="#fff"/><path d="M103 0l9.500 15h60l8.500-15" fill="none" stroke="#8a8a8a"/>
</svg>
<div class="abs" style="left:159px;top:970px;font-size:12px;line-height:14px;color:#111;white-space:nowrap">模型</div>
<div class="abs" style="left:197px;top:970px;font-family:'Liberation Mono',monospace;font-weight:bold;font-size:11.300px;line-height:14px;color:#000;white-space:nowrap;letter-spacing:-.05px">MSDRI-A1</div>
<div class="grip" style="left:4px;top:991px;height:14px"></div>

<svg class="abs" style="left:5px;top:134px" width="16" height="16" viewBox="0 0 16 16"><path d="M2 14l12-12" stroke="#3a3a3a" stroke-width="1.300" fill="none"/><rect x=".500" y="12.500" width="3" height="3" fill="#fff" stroke="#333"/><rect x="12.500" y=".500" width="3" height="3" fill="#fff" stroke="#333"/><path d="M16.500 16.500h-4.500l4.500-4.500z" fill="#444"/></svg>
<svg class="abs" style="left:5px;top:156px" width="16" height="16" viewBox="0 0 16 16"><path d="M0 12l12-12M3 15.500l13-13" stroke="#3a3a3a" stroke-width="1.300" fill="none"/></svg>
<svg class="abs" style="left:5px;top:178px" width="16" height="16" viewBox="0 0 16 16"><circle cx="7.500" cy="7.500" r="7" fill="url(#gz)" stroke="#3a3a3a" stroke-width="1.300"/><rect x="6" y="6" width="3" height="3" fill="#fff" stroke="#222"/><path d="M16.500 16.500h-4.500l4.500-4.500z" fill="#444"/></svg>
<svg class="abs" style="left:5px;top:200px" width="16" height="16" viewBox="0 0 16 16"><path d="M2 14c0-7 5-12 12-12" stroke="#3a3a3a" stroke-width="1.300" fill="none"/><rect x=".500" y="12.500" width="3" height="3" fill="#fff" stroke="#333"/><rect x="12.500" y=".500" width="3" height="3" fill="#fff" stroke="#333"/><path d="M16.500 16.500h-4.500l4.500-4.500z" fill="#444"/></svg>
<svg class="abs" style="left:5px;top:222px" width="16" height="16" viewBox="0 0 16 16"><path d="M2 14c0-8 5-2 8-5 2-2 3-5 4-7" stroke="#222" stroke-width="1.500" fill="none"/><rect x=".500" y="12.500" width="3" height="3" fill="#fff" stroke="#222"/><rect x="12.500" y=".500" width="3" height="3" fill="#fff" stroke="#222"/></svg>
<svg class="abs" style="left:5px;top:244px" width="16" height="16" viewBox="0 0 16 16"><rect x="6.500" y="6.500" width="2.500" height="2.500" fill="#fff" stroke="#222"/></svg>
<svg class="abs" style="left:5px;top:266px" width="16" height="16" viewBox="0 0 16 16"><ellipse cx="8" cy="8.500" rx="7" ry="4.500" fill="url(#gz)" stroke="#333" stroke-width="1.300"/><rect x="6.500" y="3" width="2.500" height="2.500" fill="#fff" stroke="#222"/><rect x="13.500" y="7" width="2.500" height="2.500" fill="#fff" stroke="#222"/></svg>
<svg class="abs" style="left:5px;top:288px" width="16" height="16" viewBox="0 0 16 16"><path d="M1.500 13.500v-8.500l13-1v9.500z" fill="url(#gp)" stroke="#333" stroke-width="1.300"/><rect x=".500" y="12.500" width="2.500" height="2.500" fill="#fff" stroke="#222"/><rect x="13" y="2.500" width="2.500" height="2.500" fill="#fff" stroke="#222"/></svg>
<svg class="abs" style="left:5px;top:310px" width="16" height="16" viewBox="0 0 16 16"><path d="M8 1l7 5.500-2.500 8h-9l-2.500-8z" fill="url(#gz)" stroke="#333" stroke-width="1.300"/><circle cx="8" cy="8.500" r="1" fill="#222"/></svg>
<svg class="abs" style="left:5px;top:332px" width="16" height="16" viewBox="0 0 16 16"><path d="M2 13.500h7c3 0 6-2 6-5.500s-3-6-6-6-4 2-4 3" stroke="#3a3a3a" stroke-width="1.300" fill="none"/><rect x=".500" y="12" width="2.500" height="2.500" fill="#fff" stroke="#222"/><rect x="7" y="12" width="2.500" height="2.500" fill="#fff" stroke="#222"/></svg>
<svg class="abs" style="left:5px;top:353px" width="16" height="16" viewBox="0 0 16 16"><path d="M4.500 1c2-1 3 0 3.500 1 .500-1 2-2 4-1s2 3.500 .500 4.500c2 .500 3.500 2 2.500 4.500s-4 2.500-5 1c-1 2-3 3-5 2s-2.500-3.500-1-5c-2-1-3-3-2-5s2-2.500 2.500-3z" fill="url(#gz)" stroke="#999" stroke-width="1.200"/></svg>
<svg class="abs" style="left:5px;top:376px" width="16" height="16" viewBox="0 0 16 16"><path d="M1 15l14-14" stroke="#1b78c8" stroke-width="1.400" stroke-dasharray="5 2 1.500 2"/><path d="M16.500 16.500h-4.500l4.500-4.500z" fill="#444"/></svg>
<svg class="abs" style="left:5px;top:398px" width="16" height="16" viewBox="0 0 16 16"><path d="M1.500 13.500h13c1-2 0-4-3-4.500v-3.500c0-4-7-4-7 0v3.500h-3.500" fill="#d8e8f5" stroke="#1b5fa8" stroke-width="1.500"/><path d="M1 11.500h9" stroke="#1b5fa8" stroke-width="1.300"/><path d="M1.500 15h13" stroke="#333" stroke-width="1.200"/></svg>
<svg class="abs" style="left:5px;top:420px" width="16" height="16" viewBox="0 0 16 16"><path d="M2 1v13h13" stroke="#111" stroke-width="1.300" fill="none"/><path d="M2 1l-1.500 2.500h3zM15 14l-2.500-1.500v3z" fill="#111"/><path d="M2 8c4-4 8-3 11 3" fill="none" stroke="#444"/></svg>
<svg class="abs" style="left:5px;top:442px" width="16" height="16" viewBox="0 0 16 16"><path d="M2 0v16M14 0v16M0 2h16M0 14h16" stroke="#555" stroke-width="1.200"/><path d="M3 6l3-3M3 9l6-6M3 12l9-9M5 13l8-8M8 13l5-5M11 13l2-2" stroke="#555" stroke-width="1"/></svg>
<svg class="abs" style="left:5px;top:464px" width="16" height="16" viewBox="0 0 16 16"><path d="M1.500 14.500v-10l3-3h5l5 6v7z" fill="url(#gp)" stroke="#555" stroke-width="1.300"/><circle cx="6.500" cy="9" r="3" fill="#fff" stroke="#333" stroke-width="1.200"/></svg>
<svg class="abs" style="left:5px;top:486px" width="16" height="16" viewBox="0 0 16 16"><rect x=".500" y="1.500" width="13" height="11" fill="#f4f4f4" stroke="#444"/><rect x=".500" y="1.500" width="13" height="3" fill="#666"/><path d="M.500 7.500h13M.500 10h13M5 4.500v8M9.500 4.500v8" stroke="#888"/><path d="M12 8v7M8.500 11.500h7" stroke="#e01010" stroke-width="2"/></svg>
<svg class="abs" style="left:5px;top:507px" width="16" height="16" viewBox="0 0 16 16"><text x="7" y="14.500" font-family="'Liberation Serif',serif" font-size="20" fill="#111" text-anchor="middle">A</text><path d="M16.500 16.500h-4.500l4.500-4.500z" fill="#444"/></svg>
<div class="abs" style="left:3px;top:531px;width:22px;height:1px;background:#c8c8c8"></div>
<svg class="abs" style="left:5px;top:539px" width="16" height="16" viewBox="0 0 16 16"><rect x="3.500" y="3.500" width="11" height="8" rx="1" fill="#f4f4f4" stroke="#444" stroke-width="1.200"/><circle cx="3.500" cy="10.500" r="3" fill="#fff" stroke="#333" stroke-width="1.200"/><rect x="13" y="9.500" width="2.500" height="2.500" fill="#fff" stroke="#222"/><path d="M16.500 16.500h-4.500l4.500-4.500z" fill="#444"/></svg>
<svg class="abs" style="left:32px;top:134px" width="16" height="16" viewBox="0 0 16 16"><path d="M1 1.500l9.500 9 2.500-2.500-9.500-8z" fill="#e9c98a" stroke="#8a6a2a" stroke-width=".8"/><path d="M9 10l2.500-3 3.500 3.500c.500 2-1.500 3.500-3 3z" fill="#e0541a"/><path d="M8 8.500l2.500-2.500 1.500 1.500-2.500 2.500z" fill="#eee"/><path d="M0 15h8" stroke="#333"/><path d="M16.500 16.500h-4.500l4.500-4.500z" fill="#444"/></svg>
<svg class="abs" style="left:32px;top:156px" width="16" height="16" viewBox="0 0 16 16"><path d="M8 1v14M1 8h14" stroke="#333" stroke-width="1.200"/><path d="M8 0l-2.500 3h5zM8 16l-2.500-3h5zM0 8l3-2.500v5zM16 8l-3-2.500v5z" fill="#333"/><circle cx="8" cy="8" r="1.800" fill="#fff" stroke="#333"/></svg>
<svg class="abs" style="left:32px;top:178px" width="16" height="16" viewBox="0 0 16 16"><circle cx="11" cy="4" r="3.500" fill="#d5ecfa" stroke="#1b8fd8" stroke-width="1.300"/><circle cx="8" cy="6" r="3.500" fill="#d5ecfa" stroke="#1b8fd8" stroke-width="1.300"/><circle cx="3.500" cy="12" r="3" fill="#f4f4f4" stroke="#444" stroke-width="1.200"/><path d="M9 14.500h4v-3" fill="none" stroke="#111" stroke-width="1.400"/><path d="M11 11.500l2-2.500 2 2.500z" fill="#111"/></svg>
<svg class="abs" style="left:32px;top:200px" width="16" height="16" viewBox="0 0 16 16"><path d="M8 2.500a6 6 0 1 0 6 6" stroke="#3a3a3a" stroke-width="1.300" fill="none"/><path d="M6 0l5 2.500-5 2.500z" fill="#333"/><circle cx="8" cy="8.500" r="1.500" fill="#111"/></svg>
<svg class="abs" style="left:32px;top:222px" width="16" height="16" viewBox="0 0 16 16"><path d="M7.500 0v16" stroke="#333" stroke-width="1.200"/><path d="M6 3v10.500h-5.500z" fill="#fff" stroke="#333"/><path d="M9.500 3v10.500h5.500z" fill="#bfe0f5" stroke="#1b78c8" stroke-width="1.300"/></svg>
<svg class="abs" style="left:32px;top:244px" width="16" height="16" viewBox="0 0 16 16"><rect x="1" y="1" width="5.500" height="5.500" fill="#e4f2fb" stroke="#1b78c8" stroke-width="1.300"/><rect x="9.500" y="1" width="5.500" height="5.500" fill="#e4f2fb" stroke="#1b78c8" stroke-width="1.300"/><rect x="1" y="9.500" width="5.500" height="5.500" fill="#fff" stroke="#444" stroke-width="1.300"/><rect x="9.500" y="9.500" width="5.500" height="5.500" fill="#cfe8f8" stroke="#1b78c8" stroke-width="1.300"/></svg>
<svg class="abs" style="left:32px;top:266px" width="16" height="16" viewBox="0 0 16 16"><rect x=".800" y=".800" width="14.400" height="14.400" fill="#bfe0f5" stroke="#1b78c8" stroke-width="1.400"/><rect x=".800" y=".800" width="8" height="8" fill="#f2f2f2" stroke="#444" stroke-width="1.300"/></svg>
<svg class="abs" style="left:32px;top:288px" width="16" height="16" viewBox="0 0 16 16"><rect x="1" y="1" width="14" height="14" fill="url(#gp)" stroke="#333" stroke-width="1.300"/><path d="M1 15v-14h14" fill="none" stroke="#1b8fe8" stroke-width="1.600" stroke-dasharray="2.500 1.500"/><path d="M15 1v14h-14" fill="none" stroke="#222" stroke-width="1.800"/></svg>
<svg class="abs" style="left:32px;top:310px" width="16" height="16" viewBox="0 0 16 16"><path d="M0 8h5M7 8h3M12 8h4" stroke="#1b78c8" stroke-width="1.300"/><path d="M5 1l6 14" stroke="#1b78c8" stroke-width="1.300"/></svg>
<svg class="abs" style="left:32px;top:332px" width="16" height="16" viewBox="0 0 16 16"><path d="M0 7h3M5 7h3M10 7h2" stroke="#111" stroke-width="1.300"/><path d="M10 0l6 13" stroke="#1b78c8" stroke-width="1.300"/></svg>
<svg class="abs" style="left:32px;top:353px" width="16" height="16" viewBox="0 0 16 16"><path d="M.700 15.300v-14.600h8v14.600z" fill="#fff" stroke="#444" stroke-width="1.200"/><path d="M8.500 .700h3l4 14.600h-7z" fill="#bfe0f5" stroke="#1b78c8" stroke-width="1.200"/><path d="M4 10.500h7" stroke="#111" stroke-width="1.400"/><path d="M9.500 8l3.500 2.500-3.500 2.500z" fill="#111"/></svg>
<svg class="abs" style="left:32px;top:376px" width="16" height="16" viewBox="0 0 16 16"><rect x=".800" y="2.800" width="14.400" height="11.400" rx="1" fill="url(#gp)" stroke="#34506c" stroke-width="1.400"/><rect x="2.500" y="1" width="3" height="3" fill="#1b5fa8"/><rect x="10.500" y="1" width="3" height="3" fill="#1b5fa8"/></svg>
<svg class="abs" style="left:32px;top:398px" width="16" height="16" viewBox="0 0 16 16"><path d="M.700 6l3-3h6l-2 3zM.700 6v6l3 2v-5M6 14.500v-8h8v8zM6 6.500l3-3.500h6.500l-1.500 3.500M15.500 3v8l-1.500 3.500" fill="#d5ecfa" stroke="#1b78c8" stroke-width="1.200"/></svg>
<div class="abs" style="left:30px;top:421px;width:22px;height:1px;background:#c8c8c8"></div>
<svg class="abs" style="left:32px;top:429px" width="16" height="16" viewBox="0 0 16 16"><path d="M1 8v8M15 8v8M1 12h14" stroke="#333" stroke-width="1.300"/><path d="M2 1l9 7-2 2.500-8.500-7.500z" fill="#f3b62a" stroke="#9a6a10" stroke-width=".8"/><path d="M11 8l-2 2.500 3.500 1z" fill="#333"/></svg>
<svg class="abs" style="left:32px;top:450px" width="16" height="16" viewBox="0 0 16 16"><path d="M5.500 1v6M15.500 1v6M6 4h9" stroke="#111" stroke-width="1.500"/><path d="M6 4l3-2.500v5zM15 4l-3-2.500v5z" fill="#111"/><path d="M.500 9.500v5M7 9.500v5M1 12h6" stroke="#1b78c8" stroke-width="1.200"/><path d="M10 14.500c3 0 4.500-1.500 4.500-4" fill="none" stroke="#111" stroke-width="1.400"/><path d="M12.500 10.500l2-2.500 2 2.500z" fill="#111"/></svg>
<svg class="abs" style="left:32px;top:472px" width="16" height="16" viewBox="0 0 16 16"><rect x="3.500" y=".700" width="11.800" height="13.600" fill="#fdfdfd" stroke="#34506c" stroke-width="1.200"/><rect x="8.500" y="2.500" width="5" height="5" fill="#2f6db5" stroke="#1d4a80"/><path d="M6 2.500v5" stroke="#2f6db5" stroke-width="1.500"/><path d="M9 7l-4 4" stroke="#e28a1a" stroke-width="1.800"/><path d="M6 9.500c-3 .500-3 3.500-6 4.500 3 1.500 8 .500 8.500-2.500z" fill="#9a4a12"/></svg>
<svg class="abs" style="left:32px;top:494px" width="16" height="16" viewBox="0 0 16 16"><path d="M2 9v-3c0-2 1-3 3-3" fill="none" stroke="#111" stroke-width="1.400"/><path d="M4 0l4 3-4 3z" fill="#111"/><path d="M9 1.500h6v2.500h-2v5h-2v-5h-2z" fill="#e8e8e8" stroke="#333" stroke-width="1.100"/><rect x=".700" y="10.700" width="14.600" height="4.600" rx="1" fill="#e4e4e4" stroke="#333" stroke-width="1.300"/><path d="M3 13h6M10.500 13h1M13 13h.8" stroke="#555"/><path d="M16.500 16.500h-4.500l4.500-4.500z" fill="#444"/></svg>
<div class="abs" style="left:5px;top:124px;width:14px;height:2px;background:repeating-linear-gradient(to right,#c4c4c4 0,#c4c4c4 2px,transparent 2px,transparent 4px)"></div>
<div class="abs" style="left:32px;top:124px;width:14px;height:2px;background:repeating-linear-gradient(to right,#c4c4c4 0,#c4c4c4 2px,transparent 2px,transparent 4px)"></div>
<div class="abs" style="left:54px;top:102px;width:6px;height:42px;background:#c2c2c2"></div>
<div class="abs" style="left:54px;top:164px;width:6px;height:42px;background:#c2c2c2"></div>
<svg class="abs" style="left:63px;top:102px" width="15" height="15" viewBox="0 0 16 16"><path d="M2 9v-3c0-2 1-3 3-3" fill="none" stroke="#111" stroke-width="1.400"/><path d="M4 0l4 3-4 3z" fill="#111"/><path d="M9 1.500h6v2.500h-2v5h-2v-5h-2z" fill="#e8e8e8" stroke="#333" stroke-width="1.100"/><rect x=".700" y="10.700" width="14.600" height="4.600" rx="1" fill="#e4e4e4" stroke="#333" stroke-width="1.300"/><path d="M3 13h6M10.500 13h1M13 13h.8" stroke="#555"/></svg>
<svg class="abs" style="left:65px;top:164px" width="12" height="15" viewBox="0 0 12 15"><rect x=".700" y=".700" width="10.600" height="13.600" fill="#fdfdfd" stroke="#777" stroke-width="1.200"/><rect x="2.500" y="2" width="7" height="6" fill="#2f6db5"/><path d="M3 10h4M3 12h6" stroke="#555"/><path d="M7.500 11l1.500 1-1.500 1" fill="none" stroke="#333"/></svg>
<div class="abs vch" style="left:64px;top:117px">图</div><div class="abs vch" style="left:64px;top:130px">库</div>
<div class="abs vch" style="left:64px;top:181px">特</div><div class="abs vch" style="left:64px;top:193px">性</div>

<!-- CANVAS -->
<div id="canvas" class="abs"></div>
<svg id="cad" class="abs" style="left:84px;top:117px" width="1805" height="853" viewBox="84 117 1805 853" shape-rendering="crispEdges">
<line x1="317.5" y1="117" x2="317.5" y2="490" stroke="#59dbdd" stroke-width="1"/>
<line x1="332.5" y1="117" x2="332.5" y2="475" stroke="#59dbdd" stroke-width="1"/>
<line x1="84" y1="455.5" x2="351" y2="455.5" stroke="#59dbdd" stroke-width="1"/>
<line x1="332" y1="437.5" x2="370" y2="437.5" stroke="#59dbdd" stroke-width="1"/>
<line x1="369.5" y1="437" x2="369.5" y2="475" stroke="#59dbdd" stroke-width="1"/>
<line x1="332" y1="474.5" x2="1249" y2="474.5" stroke="#59dbdd" stroke-width="1"/>
<line x1="317" y1="489.5" x2="1264" y2="489.5" stroke="#59dbdd" stroke-width="1"/>
<line x1="351.5" y1="117" x2="351.5" y2="163" stroke="#f0ee74" stroke-width="1"/>
<line x1="351.5" y1="163" x2="351.5" y2="358" stroke="#59dbdd" stroke-width="1"/>
<line x1="351.5" y1="358" x2="351.5" y2="457" stroke="#f0ee74" stroke-width="1"/>
<line x1="351.5" y1="457" x2="351.5" y2="815" stroke="#59dbdd" stroke-width="1"/>
<line x1="351" y1="255.5" x2="764" y2="255.5" stroke="#59dbdd" stroke-width="1"/>
<path d="M352.0,255.5 L371.0,253.0 L371.0,258.0 Z" fill="#22eef4" shape-rendering="geometricPrecision"/>
<path d="M763.0,255.5 L744.0,258.0 L744.0,253.0 Z" fill="#22eef4" shape-rendering="geometricPrecision"/>
<line x1="351" y1="351.5" x2="795" y2="351.5" stroke="#59dbdd" stroke-width="1"/>
<path d="M352.0,351.5 L371.0,349.0 L371.0,354.0 Z" fill="#22eef4" shape-rendering="geometricPrecision"/>
<text x="557" y="250.5" font-family="'Liberation Serif', serif" font-size="32" font-weight="normal" fill="#59dbdd" text-anchor="middle" textLength="44" lengthAdjust="spacingAndGlyphs" shape-rendering="geometricPrecision">6578</text>
<text x="572" y="348" font-family="'Liberation Serif', serif" font-size="32" font-weight="normal" fill="#59dbdd" text-anchor="middle" textLength="44" lengthAdjust="spacingAndGlyphs" shape-rendering="geometricPrecision">7064</text>
<line x1="351" y1="807.5" x2="1701" y2="807.5" stroke="#59dbdd" stroke-width="1"/>
<path d="M352.0,807.5 L371.0,805.0 L371.0,810.0 Z" fill="#22eef4" shape-rendering="geometricPrecision"/>
<path d="M1229.0,807.5 L1210.0,810.0 L1210.0,805.0 Z" fill="#22eef4" shape-rendering="geometricPrecision"/>
<path d="M1230.0,807.5 L1249.0,805.0 L1249.0,810.0 Z" fill="#22eef4" shape-rendering="geometricPrecision"/>
<path d="M1323.0,807.5 L1304.0,810.0 L1304.0,805.0 Z" fill="#22eef4" shape-rendering="geometricPrecision"/>
<path d="M1324.0,807.5 L1343.0,805.0 L1343.0,810.0 Z" fill="#22eef4" shape-rendering="geometricPrecision"/>
<path d="M1700.0,807.5 L1681.0,810.0 L1681.0,805.0 Z" fill="#22eef4" shape-rendering="geometricPrecision"/>
<text x="784" y="803.5" font-family="'Liberation Serif', serif" font-size="32" font-weight="normal" fill="#59dbdd" text-anchor="middle" textLength="54" lengthAdjust="spacingAndGlyphs" shape-rendering="geometricPrecision">14000</text>
<text x="1276" y="803.5" font-family="'Liberation Serif', serif" font-size="32" font-weight="normal" fill="#59dbdd" text-anchor="middle" textLength="41" lengthAdjust="spacingAndGlyphs" shape-rendering="geometricPrecision">1500</text>
<text x="1510.5" y="803.5" font-family="'Liberation Serif', serif" font-size="32" font-weight="normal" fill="#59dbdd" text-anchor="middle" textLength="43" lengthAdjust="spacingAndGlyphs" shape-rendering="geometricPrecision">6000</text>
<line x1="351" y1="455.5" x2="1800" y2="455.5" stroke="#f0ee74" stroke-width="1"/>
<line x1="1801" y1="455.5" x2="1889" y2="455.5" stroke="#59dbdd" stroke-width="1"/>
<line x1="84" y1="683.5" x2="765" y2="216" stroke="#4bd04b" stroke-width="1"/>
<line x1="330.7" y1="632.3" x2="630.7" y2="798.3" stroke="#4bd04b" stroke-width="1"/>
<path d="M450.7,698.3 L440.7,715 L520.7,719.3 L514,733.3" stroke="#4bd04b" stroke-width="1" fill="none"/>
<line x1="664.5" y1="117" x2="664.5" y2="229" stroke="#4bd04b" stroke-width="1"/>
<line x1="664" y1="222.5" x2="1230" y2="222.5" stroke="#4bd04b" stroke-width="1"/>
<line x1="664" y1="228.5" x2="727" y2="228.5" stroke="#4bd04b" stroke-width="1"/>
<line x1="726.5" y1="222" x2="726.5" y2="229" stroke="#4bd04b" stroke-width="1"/>
<circle cx="351.5" cy="836.5" r="22" stroke="#4bd04b" fill="none"/>
<text x="351.5" y="845.0" font-family="'Liberation Serif', serif" font-size="42" font-weight="normal" fill="#4bd04b" text-anchor="middle" textLength="12" lengthAdjust="spacingAndGlyphs" stroke="#4bd04b" stroke-width="0.3" shape-rendering="geometricPrecision">1</text>
<circle cx="1230" cy="837.3" r="22" stroke="#4bd04b" fill="none"/>
<text x="1230" y="845.8" font-family="'Liberation Serif', serif" font-size="42" font-weight="normal" fill="#4bd04b" text-anchor="middle" textLength="12" lengthAdjust="spacingAndGlyphs" stroke="#4bd04b" stroke-width="0.3" shape-rendering="geometricPrecision">2</text>
<circle cx="1323.4" cy="840.5" r="22" stroke="#4bd04b" fill="none"/>
<text x="1323.4" y="849.0" font-family="'Liberation Serif', serif" font-size="42" font-weight="normal" fill="#4bd04b" text-anchor="middle" textLength="12" lengthAdjust="spacingAndGlyphs" stroke="#4bd04b" stroke-width="0.3" shape-rendering="geometricPrecision">3</text>
<circle cx="1704.2" cy="840.5" r="22" stroke="#4bd04b" fill="none"/>
<text x="1704.2" y="849.0" font-family="'Liberation Serif', serif" font-size="42" font-weight="normal" fill="#4bd04b" text-anchor="middle" textLength="12" lengthAdjust="spacingAndGlyphs" stroke="#4bd04b" stroke-width="0.3" shape-rendering="geometricPrecision">4</text>
<line x1="447.3" y1="696.7" x2="767.5" y2="117" stroke="#ffffff" stroke-width="1"/>
<line x1="524" y1="736.7" x2="851.2" y2="150.1" stroke="#ffffff" stroke-width="1"/>
<line x1="485.7" y1="716.7" x2="810" y2="130.7" stroke="#f0ee74" stroke-width="1"/>
<line x1="445.7" y1="490" x2="359" y2="646.7" stroke="#c02828" stroke-width="1"/>
<line x1="452.3" y1="490" x2="365.7" y2="649.3" stroke="#c02828" stroke-width="1"/>
<line x1="584" y1="771.7" x2="716" y2="533" stroke="#c02828" stroke-width="1"/>
<line x1="590" y1="774" x2="722" y2="535.5" stroke="#c02828" stroke-width="1"/>
<line x1="630.7" y1="455.5" x2="720" y2="505.5" stroke="#59dbdd" stroke-width="1"/>
<line x1="664" y1="159.5" x2="1560" y2="159.5" stroke="#f0ee74" stroke-width="1"/>
<line x1="696.5" y1="117" x2="696.5" y2="281" stroke="#f0ee74" stroke-width="1"/>
<line x1="794.5" y1="159" x2="794.5" y2="358" stroke="#59dbdd" stroke-width="1"/>
<line x1="763" y1="214.5" x2="975" y2="214.5" stroke="#59dbdd" stroke-width="1"/>
<line x1="763.5" y1="214" x2="763.5" y2="263" stroke="#59dbdd" stroke-width="1"/>
<line x1="966.5" y1="214" x2="966.5" y2="480" stroke="#59dbdd" stroke-width="1"/>
<path d="M966.5,215.0 L969.0,234.0 L964.0,234.0 Z" fill="#22eef4" shape-rendering="geometricPrecision"/>
<line x1="763.5" y1="214.5" x2="891.5" y2="285.6" stroke="#59dbdd" stroke-width="1"/>
<line x1="882.7" y1="286" x2="838" y2="366" stroke="#59dbdd" stroke-width="1"/>
<path d="M882.7,286.0 L878.1,299.4 L873.7,297.0 Z" fill="#22eef4" shape-rendering="geometricPrecision"/>
<text x="962.5" y="336" font-family="'Liberation Serif', serif" font-size="31" font-weight="normal" fill="#59dbdd" text-anchor="start" textLength="21" lengthAdjust="spacingAndGlyphs" transform="rotate(-90 962.5 336)" shape-rendering="geometricPrecision">88</text>
<path d="M754.4,117 L722.5,175.7 L722.5,222 L727.5,225.1 L810,225.1 L853.7,148.2 L796,117" stroke="#b83ab8" stroke-width="1" fill="none"/>
<path d="M777.5,118.2 L746.2,170.7 L811.2,207 L843.7,149.5 Z" stroke="#b83ab8" stroke-width="1" fill="none"/>
<path d="M779.5,121 L750,168.8 L810,201.4 L838.7,150.7 Z" stroke="#b83ab8" stroke-width="1" fill="none"/>
<line x1="778" y1="117" x2="851.2" y2="150.1" stroke="#ffffff" stroke-width="1"/>
<line x1="780" y1="120.5" x2="848.5" y2="151.5" stroke="#ffffff" stroke-width="1"/>
<path d="M732,169 L819.5,216.5 L793.6,260 L707.5,212 Z" stroke="#ffffff" stroke-width="1" fill="none"/>
<path d="M656.2,117 L630,163.2 L630,168.2 L633.7,173.2 L648.7,182.6 L656.2,182 L660,178.2 L693.7,117" stroke="#ffffff" stroke-width="1" fill="none"/>
<path d="M661.2,117 L635,163.9 L635,167.6 L637.5,170.7 L650,178.2 L655.6,177.6 L658.1,175.1 L688.7,117" stroke="#ffffff" stroke-width="1" fill="none"/>
<line x1="675" y1="117" x2="639.4" y2="182.6" stroke="#f0ee74" stroke-width="1"/>
<line x1="629.4" y1="140.5" x2="763.7" y2="214.5" stroke="#f0ee74" stroke-width="1"/>
<line x1="638.7" y1="145.1" x2="676" y2="166" stroke="#c02828" stroke-width="1.3"/>
<line x1="674" y1="155.7" x2="666.5" y2="169.8" stroke="#ffffff" stroke-width="2.6"/>
<path d="M671.0,175.5 L682.4,181.7 L693.0,162.5 L681.6,156.2 Z" stroke="#ffffff" stroke-width="1" fill="none"/>
<path d="M681.6,184.2 L692.1,190.0 L705.2,166.3 L694.7,160.5 Z" stroke="#ffffff" stroke-width="1" fill="none"/>
<path d="M696.2,182.5 L703.2,186.4 L708.1,177.6 L701.1,173.8 Z" stroke="#ffffff" stroke-width="1" fill="none"/>
<path d="M698.7,197.6 L702.3,199.5 L718.7,169.8 L715.2,167.8 Z" stroke="#ffffff" stroke-width="1" fill="none"/>
<path d="M703.1,200.0 L706.6,202.0 L723.1,172.2 L719.5,170.3 Z" stroke="#ffffff" stroke-width="1" fill="none"/>
<path d="M711.9,192.3 L719.8,196.7 L725.6,186.2 L717.7,181.8 Z" stroke="#ffffff" stroke-width="1" fill="none"/>
<path d="M807.8,245.2 L816.6,250.0 L822.4,239.5 L813.6,234.7 Z" stroke="#ffffff" stroke-width="1" fill="none"/>
<path d="M811.7,259.9 L815.2,261.9 L831.6,232.1 L828.1,230.2 Z" stroke="#ffffff" stroke-width="1" fill="none"/>
<path d="M816.6,260.3 L819.2,261.8 L833.7,235.5 L831.1,234.1 Z" stroke="#ffffff" stroke-width="1" fill="none"/>
<line x1="740.6" y1="166.2" x2="712" y2="218" stroke="#ffffff" stroke-width="1"/>
<line x1="1229.5" y1="117" x2="1229.5" y2="431" stroke="#f0ee74" stroke-width="1"/>
<line x1="1229.5" y1="432" x2="1229.5" y2="475" stroke="#1414b8" stroke-width="1"/>
<line x1="1210" y1="455.5" x2="1252" y2="455.5" stroke="#1414b8" stroke-width="1"/>
<line x1="1229.5" y1="475" x2="1229.5" y2="479" stroke="#c02828" stroke-width="1"/>
<line x1="1229.5" y1="479" x2="1229.5" y2="815" stroke="#59dbdd" stroke-width="1"/>
<rect x="1210.5" y="436.5" width="38.0" height="38.0" stroke="#59dbdd" stroke-width="1" fill="none"/>
<line x1="1248.5" y1="117" x2="1248.5" y2="475" stroke="#59dbdd" stroke-width="1"/>
<line x1="1263.5" y1="117" x2="1263.5" y2="490" stroke="#59dbdd" stroke-width="1"/>
<line x1="1323.5" y1="117" x2="1323.5" y2="472" stroke="#f0ee74" stroke-width="1"/>
<line x1="1323.5" y1="472" x2="1323.5" y2="815" stroke="#59dbdd" stroke-width="1"/>
<line x1="1230" y1="222.5" x2="1488" y2="222.5" stroke="#59dbdd" stroke-width="1"/>
<line x1="1700.5" y1="117" x2="1700.5" y2="472" stroke="#f0ee74" stroke-width="1"/>
<line x1="1700.5" y1="472" x2="1700.5" y2="815" stroke="#59dbdd" stroke-width="1"/>
<line x1="1705.5" y1="117" x2="1705.5" y2="440" stroke="#59dbdd" stroke-width="1"/>
<line x1="1712.5" y1="117" x2="1712.5" y2="472" stroke="#59dbdd" stroke-width="1"/>
<line x1="1706" y1="207.5" x2="1889" y2="207.5" stroke="#59dbdd" stroke-width="1"/>
<line x1="1706" y1="214.5" x2="1889" y2="214.5" stroke="#59dbdd" stroke-width="1"/>
<line x1="1263" y1="465.5" x2="1713" y2="465.5" stroke="#59dbdd" stroke-width="1"/>
<line x1="1263" y1="471.5" x2="1713" y2="471.5" stroke="#59dbdd" stroke-width="1"/>
<path d="M1311.5,439.5 L1336.5,439.5 L1336.5,446.5 L1328.5,446.5 L1328.5,465.5 L1318.5,465.5 L1318.5,446.5 L1311.5,446.5 Z" stroke="#59dbdd" stroke-width="1" fill="none"/>
<line x1="1311.5" y1="465" x2="1311.5" y2="472" stroke="#59dbdd" stroke-width="1"/>
<line x1="1336.5" y1="465" x2="1336.5" y2="472" stroke="#59dbdd" stroke-width="1"/>
<path d="M1687.5,439.5 L1712.5,439.5 L1712.5,446.5 L1704.5,446.5 L1704.5,465.5 L1694.5,465.5 L1694.5,446.5 L1687.5,446.5 Z" stroke="#59dbdd" stroke-width="1" fill="none"/>
<line x1="1687.5" y1="465" x2="1687.5" y2="472" stroke="#59dbdd" stroke-width="1"/>
<line x1="1712.5" y1="465" x2="1712.5" y2="472" stroke="#59dbdd" stroke-width="1"/>
<line x1="1350.5" y1="472" x2="1350.5" y2="565" stroke="#59dbdd" stroke-width="1"/>
<line x1="1547.5" y1="472" x2="1547.5" y2="565" stroke="#59dbdd" stroke-width="1"/>
<line x1="1449.5" y1="117" x2="1449.5" y2="580" stroke="#59dbdd" stroke-width="1"/>
<path d="M1350.5,565.5 A99,93.5 0 0 0 1449.5,473 A98,93.5 0 0 0 1547.5,565.5" stroke="#59dbdd" fill="none"/>
<line x1="1404.5" y1="117" x2="1404.5" y2="231" stroke="#59dbdd" stroke-width="1"/>
<line x1="1406.5" y1="117" x2="1406.5" y2="231" stroke="#59dbdd" stroke-width="1"/>
<line x1="1411" y1="117" x2="1411" y2="231" stroke="#22eef4" stroke-width="2"/>
<line x1="1487.5" y1="117" x2="1487.5" y2="223" stroke="#59dbdd" stroke-width="1"/>
<line x1="1505.5" y1="117" x2="1505.5" y2="224" stroke="#59dbdd" stroke-width="1"/>
<line x1="1510.5" y1="117" x2="1510.5" y2="238" stroke="#59dbdd" stroke-width="1"/>
<line x1="1514.5" y1="117" x2="1514.5" y2="238" stroke="#59dbdd" stroke-width="1"/>
<line x1="1518.5" y1="117" x2="1518.5" y2="224" stroke="#59dbdd" stroke-width="1"/>
<line x1="1505" y1="224.5" x2="1519" y2="224.5" stroke="#59dbdd" stroke-width="1"/>
<line x1="1559.5" y1="117" x2="1559.5" y2="231" stroke="#59dbdd" stroke-width="1"/>
<line x1="1562.5" y1="117" x2="1562.5" y2="231" stroke="#59dbdd" stroke-width="1"/>
<rect x="1402.5" y="230.5" width="162.0" height="10.0" stroke="#59dbdd" stroke-width="1" fill="none"/>
<line x1="1408" y1="233.5" x2="1560" y2="233.5" stroke="#22eef4" stroke-width="2"/>
<line x1="1408" y1="238" x2="1560" y2="238" stroke="#22eef4" stroke-width="2"/>
<rect x="1402.5" y="229.5" width="10.0" height="12.0" stroke="#59dbdd" stroke-width="1" fill="none"/>
<rect x="1554.5" y="229.5" width="10.0" height="12.0" stroke="#59dbdd" stroke-width="1" fill="none"/>
<rect x="1431.5" y="230.5" width="36.0" height="11.0" stroke="#22eef4" stroke-width="2" fill="none"/>
<rect x="1441.5" y="226.5" width="16.0" height="4.0" stroke="#22eef4" stroke-width="1" fill="none"/>
<line x1="1437" y1="224.5" x2="1461" y2="224.5" stroke="#22eef4" stroke-width="2"/>
<line x1="1443.5" y1="241" x2="1443.5" y2="270" stroke="#59dbdd" stroke-width="1"/>
<line x1="1446.5" y1="241" x2="1446.5" y2="270" stroke="#59dbdd" stroke-width="1"/>
<line x1="1452.5" y1="241" x2="1452.5" y2="270" stroke="#59dbdd" stroke-width="1"/>
<line x1="1455.5" y1="241" x2="1455.5" y2="270" stroke="#59dbdd" stroke-width="1"/>
<rect x="1439.5" y="250.5" width="21.0" height="9.0" stroke="#22eef4" stroke-width="1" fill="none"/>
<line x1="1439" y1="255" x2="1461" y2="255" stroke="#59dbdd" stroke-width="1"/>
<line x1="1445.5" y1="250" x2="1445.5" y2="260" stroke="#22eef4" stroke-width="2"/>
<line x1="1453.5" y1="250" x2="1453.5" y2="260" stroke="#22eef4" stroke-width="2"/>
<rect x="1428.5" y="265.5" width="72.0" height="38.0" stroke="#59dbdd" stroke-width="1" fill="none"/>
<rect x="1432" y="271.5" width="60" height="26.0" stroke="#22eef4" stroke-width="2" fill="none"/>
<line x1="1434" y1="272.5" x2="1490" y2="272.5" stroke="#22eef4" stroke-width="3"/>
<line x1="1436" y1="296" x2="1492" y2="296" stroke="#22eef4" stroke-width="3"/>
<rect x="1428.5" y="265.5" width="10.0" height="6.0" stroke="#59dbdd" stroke-width="1" fill="none"/>
<rect x="1490.5" y="265.5" width="10.0" height="6.0" stroke="#59dbdd" stroke-width="1" fill="none"/>
<rect x="1428.5" y="297.5" width="10.0" height="6.0" stroke="#59dbdd" stroke-width="1" fill="none"/>
<rect x="1451.5" y="280.5" width="9.0" height="9.0" stroke="#59dbdd" stroke-width="1" fill="none"/>
<rect x="1474.5" y="280.5" width="9.0" height="9.0" stroke="#59dbdd" stroke-width="1" fill="none"/>
<line x1="1432" y1="284.5" x2="1496" y2="284.5" stroke="#22eef4" stroke-width="1"/>
<line x1="1432" y1="285.5" x2="1452" y2="285.5" stroke="#22eef4" stroke-width="2"/>
<line x1="1483.5" y1="271" x2="1483.5" y2="298" stroke="#59dbdd" stroke-width="1"/>
<rect x="1492.5" y="276.5" width="5.0" height="16.0" stroke="#59dbdd" stroke-width="1" fill="none"/>
<line x1="1458.6" y1="300.6" x2="1468.3" y2="310.3" stroke="#59dbdd" stroke-width="1"/>
<line x1="1468.5" y1="300" x2="1468.5" y2="311" stroke="#59dbdd" stroke-width="1"/>
<rect x="1476.5" y="298.5" width="14.0" height="13.0" stroke="#22eef4" stroke-width="2" fill="none"/>
<rect x="1471.5" y="311.5" width="25" height="44" rx="3" stroke="#22eef4" fill="none" stroke-width="1.4" shape-rendering="geometricPrecision"/>
<rect x="1467.5" y="339.5" width="33.0" height="10.0" stroke="#59dbdd" stroke-width="1" fill="none"/>
<line x1="1471" y1="317.5" x2="1497" y2="317.5" stroke="#22eef4" stroke-width="2"/>
<line x1="1471" y1="329.5" x2="1497" y2="329.5" stroke="#59dbdd" stroke-width="1"/>
<line x1="1471" y1="342.5" x2="1497" y2="342.5" stroke="#59dbdd" stroke-width="1"/>
<line x1="1471" y1="346.5" x2="1497" y2="346.5" stroke="#22eef4" stroke-width="1"/>
<line x1="1483.5" y1="303" x2="1483.5" y2="359" stroke="#59dbdd" stroke-width="1"/>
<line x1="1550.3" y1="117" x2="1586.7" y2="250.7" stroke="#f0ee74" stroke-width="1"/>
<line x1="1561.7" y1="257.3" x2="1613.3" y2="243.2" stroke="#59dbdd" stroke-width="1"/>
<line x1="1547" y1="250.5" x2="1581" y2="250.5" stroke="#f0ee74" stroke-width="1"/>
<line x1="1554.5" y1="250" x2="1554.5" y2="456" stroke="#f0ee74" stroke-width="1"/>
<path d="M1554.5,251.0 L1556.8,266.0 L1552.2,266.0 Z" fill="#f8ee20" shape-rendering="geometricPrecision"/>
<path d="M1554.5,455.0 L1552.2,440.0 L1556.8,440.0 Z" fill="#f8ee20" shape-rendering="geometricPrecision"/>
<line x1="1586.5" y1="257" x2="1586.5" y2="303" stroke="#f0ee74" stroke-width="1"/>
<line x1="1586" y1="295.5" x2="1701" y2="295.5" stroke="#f0ee74" stroke-width="1"/>
<path d="M1587.0,295.5 L1602.0,293.2 L1602.0,297.8 Z" fill="#f8ee20" shape-rendering="geometricPrecision"/>
<path d="M1700.0,295.5 L1685.0,297.8 L1685.0,293.2 Z" fill="#f8ee20" shape-rendering="geometricPrecision"/>
<text x="1642.5" y="289.5" font-family="'Liberation Serif', serif" font-size="32" font-weight="normal" fill="#ffffff" text-anchor="middle" textLength="41" lengthAdjust="spacingAndGlyphs" shape-rendering="geometricPrecision">1812</text>
<text x="1546.5" y="352" font-family="'Liberation Serif', serif" font-size="32" font-weight="normal" fill="#ffffff" text-anchor="middle" textLength="44" lengthAdjust="spacingAndGlyphs" transform="rotate(-90 1546.5 352)" shape-rendering="geometricPrecision">3263</text>
<line x1="1582.5" y1="381.9" x2="1638" y2="328.6" stroke="#4bd04b" stroke-width="1"/>
<line x1="1582.5" y1="407.4" x2="1634.2" y2="358.2" stroke="#4bd04b" stroke-width="1"/>
<path d="M1582.5,381.9 L1608.7,381.9 L1608.7,355.6" stroke="#4bd04b" stroke-width="1" fill="none"/>
<text x="1614.5" y="340" font-family="'Liberation Serif', serif" font-size="30" font-weight="normal" fill="#4bd04b" text-anchor="middle" textLength="50" lengthAdjust="spacingAndGlyphs" transform="rotate(-44 1614.5 340)" shape-rendering="geometricPrecision">8.40</text>

</svg>

<!-- DIALOG -->
<div id="dlg" class="abs">
  <div id="dlgtitle" class="abs">查询结果</div>
  <div class="abs" style="left:478px;top:4px;width:16px;height:13px;background:#d4d0c8;border:1px solid;border-color:#fff #404040 #404040 #fff;box-shadow:inset -1px -1px 0 #808080"><svg class="abs" style="left:3px;top:2px" width="8" height="7" viewBox="0 0 8 7"><path d="M0 0h2l2 2.500 2-2.500h2l-3 3.500 3 3.500h-2l-2-2.500-2 2.500h-2l3-3.500z" fill="#000"/></svg></div>
  <div class="abs" style="left:13px;top:32px;font-size:12px;line-height:14px;color:#000;letter-spacing:.5px">查询结果:</div>
  <div id="qtext" class="abs sunken">
    <div class="l" style="top:3px"><b>第</b>1<b>个坐标点</b>: X = 126.645  Y = 117.525</div>
    <div class="l" style="top:16px"><b>第</b>2<b>个坐标点</b>: X = 266.645  Y = 117.525</div>
    <div class="l" style="top:29px"><b>两点坐标分量差值</b>: <b>△</b>X = 140.000  <b>△</b>Y = -0.000</div>
    <div class="l" style="top:42px"><b>两点距离</b>:  140.000</div>
    <div class="abs" style="left:454px;top:1px;width:16px;height:238px;background-color:#e9e7e3;background-image:conic-gradient(#fff 25%,#d4d0c8 0 50%,#fff 0 75%,#d4d0c8 0);background-size:2px 2px"></div>
    <div class="sbtn" style="left:454px;top:1px"><svg class="abs" style="left:3px;top:5px" width="7" height="4" viewBox="0 0 7 4"><path d="M0 4h7l-3.500-4z" fill="#808080"/></svg></div>
    <div class="sbtn" style="left:454px;top:223px"><svg class="abs" style="left:3px;top:5px" width="7" height="4" viewBox="0 0 7 4"><path d="M0 0h7l-3.500 4z" fill="#808080"/></svg></div>
  </div>
  <div class="abs" style="left:118px;top:340px;width:75px;height:23px;border:1px solid #000"><div class="btn" style="left:0;top:0;width:73px;height:21px;line-height:18px">关闭</div></div>
  <div class="btn" style="left:280px;top:340px;width:73px;height:23px">保存</div>
</div>

<!-- STATUS BAR -->
<div id="status" class="abs">
  <div class="st" style="left:9px">拾取第二点:</div>
  <div class="st" style="left:1338px">Dist DI</div>
  <div class="st" style="left:1439px;letter-spacing:-.35px">@140.000 &lt;-0.000°</div>
  <div class="st" style="left:1627px">屏幕点</div>
  <div class="st" style="left:1728px">正交</div>
  <div class="st" style="left:1770px">线宽</div>
  <div class="st" style="left:1812px">动态输入</div>
  <div class="st" style="left:1878px">导航</div>
  <svg class="abs" style="left:1909px;top:10px" width="7" height="4" viewBox="0 0 7 4"><path d="M0 0h7l-3.500 4z" fill="#3a86e0"/></svg>
</div>

<!-- TASKBAR -->
<div id="taskbar" class="abs"></div>
<!-- start -->
<div class="abs tbtn" style="left:2px;top:1040px;width:47px;height:37px"></div>
<svg class="abs" style="left:4px;top:1050px" width="18" height="17" viewBox="0 0 18 17"><path d="M1 3.500c2-1.500 4-1.500 6.500-.300l-1.300 5c-2.300-1.200-4.300-1.200-6.300.300z" fill="#e8542a"/><path d="M8.500 3.500c2.500 1.200 4.500 1.200 7-.300l-1.300 5c-2.500 1.500-4.500 1.500-7 .300z" fill="#7fbf3a"/><path d="M-.2 9.500c2-1.500 4-1.500 6.300-.300l-1.300 5c-2.300-1.200-4.300-1.200-6.300.300z" fill="#3a8ee0"/><path d="M7 9.500c2.500 1.200 4.500 1.200 7-.300l-1.300 5c-2.500 1.500-4.500 1.500-7 .300z" fill="#f5c22a"/></svg>
<div class="abs" style="left:21px;top:1051px;font-size:12.500px;line-height:16px;color:#000;white-space:nowrap;letter-spacing:-.3px">开始</div>
<!-- QQ -->
<svg class="abs" style="left:67px;top:1042px" width="30" height="33" viewBox="0 0 30 33"><ellipse cx="8" cy="30.500" rx="5.500" ry="2.200" fill="#f2a51e"/><ellipse cx="22" cy="30.500" rx="5.500" ry="2.200" fill="#f2a51e"/><path d="M2 25c-2-4 0-9 4-12-1-7 3-12 9-12s10 5 9 12c4 3 6 8 4 12-1 1-2 0-3-2-1 4-5 7-10 7s-9-3-10-7c-1 2-2 3-3 2z" fill="#141414"/><ellipse cx="15" cy="22.500" rx="7.500" ry="7.500" fill="#fff"/><ellipse cx="12" cy="8" rx="2.300" ry="3.200" fill="#fff"/><ellipse cx="18" cy="8" rx="2.300" ry="3.200" fill="#fff"/><circle cx="12.500" cy="8.500" r="1" fill="#111"/><circle cx="17.500" cy="8.500" r="1" fill="#111"/><ellipse cx="15" cy="13.500" rx="5.500" ry="1.800" fill="#f2a51e"/><path d="M5.500 15c6 3.500 13 3.500 19 0l.8 3.500c-6 3.500-14.600 3.500-20.600 0z" fill="#e2231a"/><path d="M8 18.500l3.500.800-1 6.500-3.500-1z" fill="#e2231a"/></svg>
<!-- folder -->
<svg class="abs" style="left:115px;top:1045px" width="34" height="31" viewBox="0 0 34 31"><path d="M1 5q0-2 2-2h9l3 3h15q2 0 2 2v20h-31z" fill="#f2d37a" stroke="#c9a640"/><rect x="3" y="2" width="3" height="2.500" fill="#3a9a3a"/><rect x="12" y="4" width="3" height="2.500" fill="#c8521a"/><rect x="19" y="6" width="3" height="2.500" fill="#3a8ee0"/><path d="M1 10h32v18h-32z" fill="#f7e3a0" stroke="#d4b04a"/><path d="M5 29v-9q0-3 3-3h18q3 0 3 3v9h-6v-6h-12v6z" fill="#8fd0f2" stroke="#4a9fd0"/><path d="M6 20.500h22" stroke="#d5effc" stroke-width="2"/></svg>
<!-- baidu task -->
<div class="abs tbtn" style="left:158px;top:1040px;width:160px;height:37px"></div>
<div class="abs" style="left:162px;top:1043px;width:32px;height:33px;border-radius:7px;background:#fff"></div>
<svg class="abs" style="left:165px;top:1047px" width="26" height="26" viewBox="0 0 26 26"><circle cx="13" cy="7.500" r="4.500" fill="none" stroke="#f0506a" stroke-width="2.800"/><path d="M8.700 6a4.500 4.500 0 0 0 1 5" fill="none" stroke="#2f8ff0" stroke-width="2.800"/><circle cx="6.500" cy="15.500" r="4.500" fill="none" stroke="#2f9af5" stroke-width="2.800"/><path d="M16 13.500a4.500 4.500 0 1 1 0 5" fill="none" stroke="#2f9af5" stroke-width="2.800"/><path d="M9.500 12l2-2.500M15 11l2.500 3" stroke="#2f8ff0" stroke-width="2.800"/><path d="M6 24.500h6" stroke="#f0506a" stroke-width="1.500"/><path d="M12 24.500h5" stroke="#2f8ff0" stroke-width="1.500"/></svg>
<div class="abs" style="left:197px;top:1051px;font-size:12.500px;line-height:16px;color:#000;white-space:nowrap;letter-spacing:-.62px">欢迎使用百度网盘</div>
<!-- caxa task (pressed) -->
<div class="abs" style="left:320px;top:1040px;width:159px;height:37px;background:#fff;border:1px solid;border-color:#404040 #fff #fff #404040;box-shadow:inset 1px 1px 0 #808080, inset -1px -1px 0 #d4d0c8"></div>
<svg class="abs" style="left:325px;top:1043px" width="30" height="32" viewBox="0 0 30 32"><path d="M2 1l4-1 23 21-3 3z" fill="#1d6fd0"/><path d="M1 30l3 2 9-10-4-2z" fill="#1d6fd0"/><circle cx="14" cy="12.500" r="7" fill="none" stroke="#3a93ea" stroke-width="3.600"/><circle cx="14" cy="12.500" r="3.500" fill="#fff"/><path d="M4 8c-3 9 4 18 14 16l-1-3.500c-6 1-11-5-9.500-11z" fill="#0d4fae"/><path d="M22 2l2 6" stroke="#8ec4f5" stroke-width="1.500"/></svg>
<div class="abs" style="left:360px;top:1051px;font-family:'Liberation Mono',monospace;font-weight:bold;font-size:11.500px;line-height:16px;color:#000;white-space:pre;letter-spacing:-.05px">CAXA CAD <span style="font-family:'Liberation Sans',sans-serif;font-size:12.500px;letter-spacing:0">电子</span>...</div>
<!-- tray -->
<svg class="abs" style="left:1688px;top:1049px" width="17" height="15" viewBox="0 0 17 15"><rect x=".500" y="4.500" width="16" height="10" rx="1.500" fill="#e8e6e0" stroke="#9a9a9a"/><path d="M3 7.500h11M3 9.500h11M4 12h9" stroke="#9a9a9a" stroke-dasharray="1.500 1"/><path d="M9 4.500c0-2 2-2 3-3.500" fill="none" stroke="#9a9a9a"/></svg>
<div class="abs" style="left:1708px;top:1046px;width:2px;height:22px;border-left:1px solid #808080;border-right:1px solid #fff"></div>
<div class="abs" style="left:1712px;top:1040px;width:206px;height:38px;border:1px solid;border-color:#808080 #fff #fff #808080"></div>
<svg class="abs" style="left:1717px;top:1050px" width="18" height="18" viewBox="0 0 30 33"><ellipse cx="8" cy="30.500" rx="5.500" ry="2.200" fill="#f2a51e"/><ellipse cx="22" cy="30.500" rx="5.500" ry="2.200" fill="#f2a51e"/><path d="M2 25c-2-4 0-9 4-12-1-7 3-12 9-12s10 5 9 12c4 3 6 8 4 12-1 1-2 0-3-2-1 4-5 7-10 7s-9-3-10-7c-1 2-2 3-3 2z" fill="#141414"/><ellipse cx="15" cy="22.500" rx="7.500" ry="7.500" fill="#fff"/><ellipse cx="12" cy="8" rx="2.300" ry="3.200" fill="#fff"/><ellipse cx="18" cy="8" rx="2.300" ry="3.200" fill="#fff"/><ellipse cx="15" cy="13.500" rx="5.500" ry="1.800" fill="#f2a51e"/><path d="M5.500 15c6 3.500 13 3.500 19 0l.8 3.500c-6 3.500-14.600 3.500-20.600 0z" fill="#e2231a"/></svg>
<svg class="abs" style="left:1742px;top:1050px" width="18" height="18" viewBox="0 0 18 18"><path d="M4 1h5v5h1.500v6l-2 2v3h-4v-3l-2-2v-6h1.500z" fill="#8a8a8a" stroke="#555"/><circle cx="12.500" cy="12.500" r="5" fill="#2fae3a" stroke="#1a7a22"/><path d="M10 12.500l2 2 3-4" fill="none" stroke="#fff" stroke-width="1.600"/></svg>
<div class="abs" style="left:1767px;top:1050px;width:16px;height:18px;border-radius:3px;background:#fff"></div>
<svg class="abs" style="left:1768px;top:1052px" width="14" height="14" viewBox="0 0 26 26"><circle cx="13" cy="7.500" r="4.500" fill="none" stroke="#f0506a" stroke-width="3"/><circle cx="6.500" cy="15.500" r="4.500" fill="none" stroke="#2f9af5" stroke-width="3"/><path d="M16 13.500a4.500 4.500 0 1 1 0 5" fill="none" stroke="#2f9af5" stroke-width="3"/><path d="M9.500 12l2-2.500M15 11l2.500 3" stroke="#2f8ff0" stroke-width="3"/><path d="M5 25h8" stroke="#f0506a" stroke-width="2"/><path d="M13 25h8" stroke="#2f8ff0" stroke-width="2"/></svg>
<svg class="abs" style="left:1791px;top:1050px" width="17" height="17" viewBox="0 0 17 17"><path d="M1 6h3l4-4v13l-4-4h-3z" fill="#f2f2f2" stroke="#8a8a8a"/><path d="M10 5.500q2 3 0 6M12 3.500q3.500 5 0 10M14 2q4.500 6.500 0 13" fill="none" stroke="#9a9a9a"/></svg>
<svg class="abs" style="left:1814px;top:1050px" width="18" height="18" viewBox="0 0 18 18"><rect x="5.500" y="3.500" width="11" height="9" fill="#e4e4e4" stroke="#666"/><path d="M8 15.500h6M11 12.500v3" stroke="#666" stroke-width="1.300"/><path d="M2 1v4M5 1v4M1 5h5v3l-1.500 1.500v3M3.500 9.500" fill="none" stroke="#555" stroke-width="1.200"/><rect x="1" y="8" width="5" height="6" fill="#fff" stroke="#666"/></svg>
<div class="abs" style="left:1853px;top:1043px;font-family:'Liberation Mono',monospace;font-size:11.500px;line-height:15px;color:#000;letter-spacing:-1.1px;white-space:nowrap">16:22</div>
<div class="abs" style="left:1844px;top:1059px;font-family:'Liberation Mono',monospace;font-size:11.500px;line-height:15px;color:#000;letter-spacing:-.95px;white-space:nowrap">2019/6/6</div>
<svg class="abs" style="left:1900px;top:1053px" width="16" height="12" viewBox="0 0 18.500 13"><rect x=".500" y=".500" width="17" height="10" fill="#3a6ea5" stroke="#1d3f6a"/><rect x="2" y="2" width="14" height="6" fill="#5a9ad5"/><path d="M5 12.500h9" stroke="#444" stroke-width="1.500"/></svg>

</body>
</html>
